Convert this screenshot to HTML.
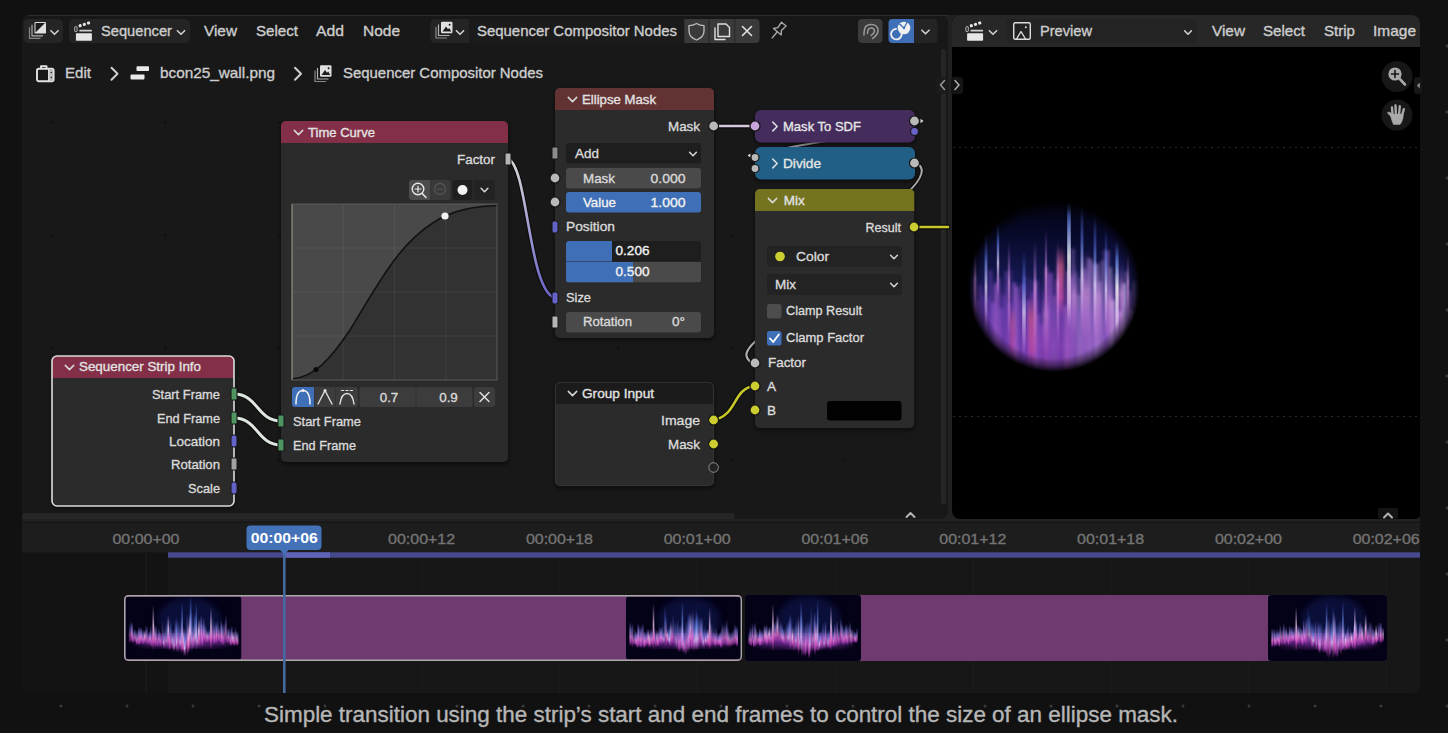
<!DOCTYPE html>
<html><head><meta charset="utf-8"><title>Sequencer Compositor Nodes</title>
<style>
html,body{margin:0;padding:0;background:#111112;width:1448px;height:733px;overflow:hidden}
svg{display:block;font-family:"Liberation Sans", "DejaVu Sans", sans-serif}
text{white-space:pre}
</style></head><body>
<svg width="1448" height="733" viewBox="0 0 1448 733">
<defs>
<clipPath id="frame"><rect x="22" y="15" width="1398" height="678" rx="8"/></clipPath>
<linearGradient id="wfs" x1="0" y1="0" x2="0" y2="1"><stop offset="0" stop-color="#d8d8d8"/><stop offset="1" stop-color="#6a63c9"/></linearGradient>
<filter id="blur1"><feGaussianBlur stdDeviation="0.6"/></filter>
<filter id="blur2"><feGaussianBlur stdDeviation="1.6"/></filter>
<filter id="blur3"><feGaussianBlur stdDeviation="3"/></filter>
<filter id="blur6"><feGaussianBlur stdDeviation="7"/></filter>
</defs>
<rect x="0" y="0" width="1448" height="733" fill="#111112" />
<circle cx="61" cy="46" r="1.5" fill="#3a3a3c"/>
<circle cx="61" cy="112" r="1.5" fill="#3a3a3c"/>
<circle cx="61" cy="178" r="1.5" fill="#3a3a3c"/>
<circle cx="61" cy="244" r="1.5" fill="#3a3a3c"/>
<circle cx="61" cy="310" r="1.5" fill="#3a3a3c"/>
<circle cx="61" cy="376" r="1.5" fill="#3a3a3c"/>
<circle cx="61" cy="442" r="1.5" fill="#3a3a3c"/>
<circle cx="61" cy="508" r="1.5" fill="#3a3a3c"/>
<circle cx="61" cy="574" r="1.5" fill="#3a3a3c"/>
<circle cx="61" cy="640" r="1.5" fill="#3a3a3c"/>
<circle cx="61" cy="706" r="1.5" fill="#3a3a3c"/>
<circle cx="127" cy="46" r="1.5" fill="#3a3a3c"/>
<circle cx="127" cy="112" r="1.5" fill="#3a3a3c"/>
<circle cx="127" cy="178" r="1.5" fill="#3a3a3c"/>
<circle cx="127" cy="244" r="1.5" fill="#3a3a3c"/>
<circle cx="127" cy="310" r="1.5" fill="#3a3a3c"/>
<circle cx="127" cy="376" r="1.5" fill="#3a3a3c"/>
<circle cx="127" cy="442" r="1.5" fill="#3a3a3c"/>
<circle cx="127" cy="508" r="1.5" fill="#3a3a3c"/>
<circle cx="127" cy="574" r="1.5" fill="#3a3a3c"/>
<circle cx="127" cy="640" r="1.5" fill="#3a3a3c"/>
<circle cx="127" cy="706" r="1.5" fill="#3a3a3c"/>
<circle cx="193" cy="46" r="1.5" fill="#3a3a3c"/>
<circle cx="193" cy="112" r="1.5" fill="#3a3a3c"/>
<circle cx="193" cy="178" r="1.5" fill="#3a3a3c"/>
<circle cx="193" cy="244" r="1.5" fill="#3a3a3c"/>
<circle cx="193" cy="310" r="1.5" fill="#3a3a3c"/>
<circle cx="193" cy="376" r="1.5" fill="#3a3a3c"/>
<circle cx="193" cy="442" r="1.5" fill="#3a3a3c"/>
<circle cx="193" cy="508" r="1.5" fill="#3a3a3c"/>
<circle cx="193" cy="574" r="1.5" fill="#3a3a3c"/>
<circle cx="193" cy="640" r="1.5" fill="#3a3a3c"/>
<circle cx="193" cy="706" r="1.5" fill="#3a3a3c"/>
<circle cx="259" cy="46" r="1.5" fill="#3a3a3c"/>
<circle cx="259" cy="112" r="1.5" fill="#3a3a3c"/>
<circle cx="259" cy="178" r="1.5" fill="#3a3a3c"/>
<circle cx="259" cy="244" r="1.5" fill="#3a3a3c"/>
<circle cx="259" cy="310" r="1.5" fill="#3a3a3c"/>
<circle cx="259" cy="376" r="1.5" fill="#3a3a3c"/>
<circle cx="259" cy="442" r="1.5" fill="#3a3a3c"/>
<circle cx="259" cy="508" r="1.5" fill="#3a3a3c"/>
<circle cx="259" cy="574" r="1.5" fill="#3a3a3c"/>
<circle cx="259" cy="640" r="1.5" fill="#3a3a3c"/>
<circle cx="259" cy="706" r="1.5" fill="#3a3a3c"/>
<circle cx="325" cy="46" r="1.5" fill="#3a3a3c"/>
<circle cx="325" cy="112" r="1.5" fill="#3a3a3c"/>
<circle cx="325" cy="178" r="1.5" fill="#3a3a3c"/>
<circle cx="325" cy="244" r="1.5" fill="#3a3a3c"/>
<circle cx="325" cy="310" r="1.5" fill="#3a3a3c"/>
<circle cx="325" cy="376" r="1.5" fill="#3a3a3c"/>
<circle cx="325" cy="442" r="1.5" fill="#3a3a3c"/>
<circle cx="325" cy="508" r="1.5" fill="#3a3a3c"/>
<circle cx="325" cy="574" r="1.5" fill="#3a3a3c"/>
<circle cx="325" cy="640" r="1.5" fill="#3a3a3c"/>
<circle cx="325" cy="706" r="1.5" fill="#3a3a3c"/>
<circle cx="391" cy="46" r="1.5" fill="#3a3a3c"/>
<circle cx="391" cy="112" r="1.5" fill="#3a3a3c"/>
<circle cx="391" cy="178" r="1.5" fill="#3a3a3c"/>
<circle cx="391" cy="244" r="1.5" fill="#3a3a3c"/>
<circle cx="391" cy="310" r="1.5" fill="#3a3a3c"/>
<circle cx="391" cy="376" r="1.5" fill="#3a3a3c"/>
<circle cx="391" cy="442" r="1.5" fill="#3a3a3c"/>
<circle cx="391" cy="508" r="1.5" fill="#3a3a3c"/>
<circle cx="391" cy="574" r="1.5" fill="#3a3a3c"/>
<circle cx="391" cy="640" r="1.5" fill="#3a3a3c"/>
<circle cx="391" cy="706" r="1.5" fill="#3a3a3c"/>
<circle cx="457" cy="46" r="1.5" fill="#3a3a3c"/>
<circle cx="457" cy="112" r="1.5" fill="#3a3a3c"/>
<circle cx="457" cy="178" r="1.5" fill="#3a3a3c"/>
<circle cx="457" cy="244" r="1.5" fill="#3a3a3c"/>
<circle cx="457" cy="310" r="1.5" fill="#3a3a3c"/>
<circle cx="457" cy="376" r="1.5" fill="#3a3a3c"/>
<circle cx="457" cy="442" r="1.5" fill="#3a3a3c"/>
<circle cx="457" cy="508" r="1.5" fill="#3a3a3c"/>
<circle cx="457" cy="574" r="1.5" fill="#3a3a3c"/>
<circle cx="457" cy="640" r="1.5" fill="#3a3a3c"/>
<circle cx="457" cy="706" r="1.5" fill="#3a3a3c"/>
<circle cx="523" cy="46" r="1.5" fill="#3a3a3c"/>
<circle cx="523" cy="112" r="1.5" fill="#3a3a3c"/>
<circle cx="523" cy="178" r="1.5" fill="#3a3a3c"/>
<circle cx="523" cy="244" r="1.5" fill="#3a3a3c"/>
<circle cx="523" cy="310" r="1.5" fill="#3a3a3c"/>
<circle cx="523" cy="376" r="1.5" fill="#3a3a3c"/>
<circle cx="523" cy="442" r="1.5" fill="#3a3a3c"/>
<circle cx="523" cy="508" r="1.5" fill="#3a3a3c"/>
<circle cx="523" cy="574" r="1.5" fill="#3a3a3c"/>
<circle cx="523" cy="640" r="1.5" fill="#3a3a3c"/>
<circle cx="523" cy="706" r="1.5" fill="#3a3a3c"/>
<circle cx="589" cy="46" r="1.5" fill="#3a3a3c"/>
<circle cx="589" cy="112" r="1.5" fill="#3a3a3c"/>
<circle cx="589" cy="178" r="1.5" fill="#3a3a3c"/>
<circle cx="589" cy="244" r="1.5" fill="#3a3a3c"/>
<circle cx="589" cy="310" r="1.5" fill="#3a3a3c"/>
<circle cx="589" cy="376" r="1.5" fill="#3a3a3c"/>
<circle cx="589" cy="442" r="1.5" fill="#3a3a3c"/>
<circle cx="589" cy="508" r="1.5" fill="#3a3a3c"/>
<circle cx="589" cy="574" r="1.5" fill="#3a3a3c"/>
<circle cx="589" cy="640" r="1.5" fill="#3a3a3c"/>
<circle cx="589" cy="706" r="1.5" fill="#3a3a3c"/>
<circle cx="655" cy="46" r="1.5" fill="#3a3a3c"/>
<circle cx="655" cy="112" r="1.5" fill="#3a3a3c"/>
<circle cx="655" cy="178" r="1.5" fill="#3a3a3c"/>
<circle cx="655" cy="244" r="1.5" fill="#3a3a3c"/>
<circle cx="655" cy="310" r="1.5" fill="#3a3a3c"/>
<circle cx="655" cy="376" r="1.5" fill="#3a3a3c"/>
<circle cx="655" cy="442" r="1.5" fill="#3a3a3c"/>
<circle cx="655" cy="508" r="1.5" fill="#3a3a3c"/>
<circle cx="655" cy="574" r="1.5" fill="#3a3a3c"/>
<circle cx="655" cy="640" r="1.5" fill="#3a3a3c"/>
<circle cx="655" cy="706" r="1.5" fill="#3a3a3c"/>
<circle cx="721" cy="46" r="1.5" fill="#3a3a3c"/>
<circle cx="721" cy="112" r="1.5" fill="#3a3a3c"/>
<circle cx="721" cy="178" r="1.5" fill="#3a3a3c"/>
<circle cx="721" cy="244" r="1.5" fill="#3a3a3c"/>
<circle cx="721" cy="310" r="1.5" fill="#3a3a3c"/>
<circle cx="721" cy="376" r="1.5" fill="#3a3a3c"/>
<circle cx="721" cy="442" r="1.5" fill="#3a3a3c"/>
<circle cx="721" cy="508" r="1.5" fill="#3a3a3c"/>
<circle cx="721" cy="574" r="1.5" fill="#3a3a3c"/>
<circle cx="721" cy="640" r="1.5" fill="#3a3a3c"/>
<circle cx="721" cy="706" r="1.5" fill="#3a3a3c"/>
<circle cx="787" cy="46" r="1.5" fill="#3a3a3c"/>
<circle cx="787" cy="112" r="1.5" fill="#3a3a3c"/>
<circle cx="787" cy="178" r="1.5" fill="#3a3a3c"/>
<circle cx="787" cy="244" r="1.5" fill="#3a3a3c"/>
<circle cx="787" cy="310" r="1.5" fill="#3a3a3c"/>
<circle cx="787" cy="376" r="1.5" fill="#3a3a3c"/>
<circle cx="787" cy="442" r="1.5" fill="#3a3a3c"/>
<circle cx="787" cy="508" r="1.5" fill="#3a3a3c"/>
<circle cx="787" cy="574" r="1.5" fill="#3a3a3c"/>
<circle cx="787" cy="640" r="1.5" fill="#3a3a3c"/>
<circle cx="787" cy="706" r="1.5" fill="#3a3a3c"/>
<circle cx="853" cy="46" r="1.5" fill="#3a3a3c"/>
<circle cx="853" cy="112" r="1.5" fill="#3a3a3c"/>
<circle cx="853" cy="178" r="1.5" fill="#3a3a3c"/>
<circle cx="853" cy="244" r="1.5" fill="#3a3a3c"/>
<circle cx="853" cy="310" r="1.5" fill="#3a3a3c"/>
<circle cx="853" cy="376" r="1.5" fill="#3a3a3c"/>
<circle cx="853" cy="442" r="1.5" fill="#3a3a3c"/>
<circle cx="853" cy="508" r="1.5" fill="#3a3a3c"/>
<circle cx="853" cy="574" r="1.5" fill="#3a3a3c"/>
<circle cx="853" cy="640" r="1.5" fill="#3a3a3c"/>
<circle cx="853" cy="706" r="1.5" fill="#3a3a3c"/>
<circle cx="919" cy="46" r="1.5" fill="#3a3a3c"/>
<circle cx="919" cy="112" r="1.5" fill="#3a3a3c"/>
<circle cx="919" cy="178" r="1.5" fill="#3a3a3c"/>
<circle cx="919" cy="244" r="1.5" fill="#3a3a3c"/>
<circle cx="919" cy="310" r="1.5" fill="#3a3a3c"/>
<circle cx="919" cy="376" r="1.5" fill="#3a3a3c"/>
<circle cx="919" cy="442" r="1.5" fill="#3a3a3c"/>
<circle cx="919" cy="508" r="1.5" fill="#3a3a3c"/>
<circle cx="919" cy="574" r="1.5" fill="#3a3a3c"/>
<circle cx="919" cy="640" r="1.5" fill="#3a3a3c"/>
<circle cx="919" cy="706" r="1.5" fill="#3a3a3c"/>
<circle cx="985" cy="46" r="1.5" fill="#3a3a3c"/>
<circle cx="985" cy="112" r="1.5" fill="#3a3a3c"/>
<circle cx="985" cy="178" r="1.5" fill="#3a3a3c"/>
<circle cx="985" cy="244" r="1.5" fill="#3a3a3c"/>
<circle cx="985" cy="310" r="1.5" fill="#3a3a3c"/>
<circle cx="985" cy="376" r="1.5" fill="#3a3a3c"/>
<circle cx="985" cy="442" r="1.5" fill="#3a3a3c"/>
<circle cx="985" cy="508" r="1.5" fill="#3a3a3c"/>
<circle cx="985" cy="574" r="1.5" fill="#3a3a3c"/>
<circle cx="985" cy="640" r="1.5" fill="#3a3a3c"/>
<circle cx="985" cy="706" r="1.5" fill="#3a3a3c"/>
<circle cx="1051" cy="46" r="1.5" fill="#3a3a3c"/>
<circle cx="1051" cy="112" r="1.5" fill="#3a3a3c"/>
<circle cx="1051" cy="178" r="1.5" fill="#3a3a3c"/>
<circle cx="1051" cy="244" r="1.5" fill="#3a3a3c"/>
<circle cx="1051" cy="310" r="1.5" fill="#3a3a3c"/>
<circle cx="1051" cy="376" r="1.5" fill="#3a3a3c"/>
<circle cx="1051" cy="442" r="1.5" fill="#3a3a3c"/>
<circle cx="1051" cy="508" r="1.5" fill="#3a3a3c"/>
<circle cx="1051" cy="574" r="1.5" fill="#3a3a3c"/>
<circle cx="1051" cy="640" r="1.5" fill="#3a3a3c"/>
<circle cx="1051" cy="706" r="1.5" fill="#3a3a3c"/>
<circle cx="1117" cy="46" r="1.5" fill="#3a3a3c"/>
<circle cx="1117" cy="112" r="1.5" fill="#3a3a3c"/>
<circle cx="1117" cy="178" r="1.5" fill="#3a3a3c"/>
<circle cx="1117" cy="244" r="1.5" fill="#3a3a3c"/>
<circle cx="1117" cy="310" r="1.5" fill="#3a3a3c"/>
<circle cx="1117" cy="376" r="1.5" fill="#3a3a3c"/>
<circle cx="1117" cy="442" r="1.5" fill="#3a3a3c"/>
<circle cx="1117" cy="508" r="1.5" fill="#3a3a3c"/>
<circle cx="1117" cy="574" r="1.5" fill="#3a3a3c"/>
<circle cx="1117" cy="640" r="1.5" fill="#3a3a3c"/>
<circle cx="1117" cy="706" r="1.5" fill="#3a3a3c"/>
<circle cx="1183" cy="46" r="1.5" fill="#3a3a3c"/>
<circle cx="1183" cy="112" r="1.5" fill="#3a3a3c"/>
<circle cx="1183" cy="178" r="1.5" fill="#3a3a3c"/>
<circle cx="1183" cy="244" r="1.5" fill="#3a3a3c"/>
<circle cx="1183" cy="310" r="1.5" fill="#3a3a3c"/>
<circle cx="1183" cy="376" r="1.5" fill="#3a3a3c"/>
<circle cx="1183" cy="442" r="1.5" fill="#3a3a3c"/>
<circle cx="1183" cy="508" r="1.5" fill="#3a3a3c"/>
<circle cx="1183" cy="574" r="1.5" fill="#3a3a3c"/>
<circle cx="1183" cy="640" r="1.5" fill="#3a3a3c"/>
<circle cx="1183" cy="706" r="1.5" fill="#3a3a3c"/>
<circle cx="1249" cy="46" r="1.5" fill="#3a3a3c"/>
<circle cx="1249" cy="112" r="1.5" fill="#3a3a3c"/>
<circle cx="1249" cy="178" r="1.5" fill="#3a3a3c"/>
<circle cx="1249" cy="244" r="1.5" fill="#3a3a3c"/>
<circle cx="1249" cy="310" r="1.5" fill="#3a3a3c"/>
<circle cx="1249" cy="376" r="1.5" fill="#3a3a3c"/>
<circle cx="1249" cy="442" r="1.5" fill="#3a3a3c"/>
<circle cx="1249" cy="508" r="1.5" fill="#3a3a3c"/>
<circle cx="1249" cy="574" r="1.5" fill="#3a3a3c"/>
<circle cx="1249" cy="640" r="1.5" fill="#3a3a3c"/>
<circle cx="1249" cy="706" r="1.5" fill="#3a3a3c"/>
<circle cx="1315" cy="46" r="1.5" fill="#3a3a3c"/>
<circle cx="1315" cy="112" r="1.5" fill="#3a3a3c"/>
<circle cx="1315" cy="178" r="1.5" fill="#3a3a3c"/>
<circle cx="1315" cy="244" r="1.5" fill="#3a3a3c"/>
<circle cx="1315" cy="310" r="1.5" fill="#3a3a3c"/>
<circle cx="1315" cy="376" r="1.5" fill="#3a3a3c"/>
<circle cx="1315" cy="442" r="1.5" fill="#3a3a3c"/>
<circle cx="1315" cy="508" r="1.5" fill="#3a3a3c"/>
<circle cx="1315" cy="574" r="1.5" fill="#3a3a3c"/>
<circle cx="1315" cy="640" r="1.5" fill="#3a3a3c"/>
<circle cx="1315" cy="706" r="1.5" fill="#3a3a3c"/>
<circle cx="1381" cy="46" r="1.5" fill="#3a3a3c"/>
<circle cx="1381" cy="112" r="1.5" fill="#3a3a3c"/>
<circle cx="1381" cy="178" r="1.5" fill="#3a3a3c"/>
<circle cx="1381" cy="244" r="1.5" fill="#3a3a3c"/>
<circle cx="1381" cy="310" r="1.5" fill="#3a3a3c"/>
<circle cx="1381" cy="376" r="1.5" fill="#3a3a3c"/>
<circle cx="1381" cy="442" r="1.5" fill="#3a3a3c"/>
<circle cx="1381" cy="508" r="1.5" fill="#3a3a3c"/>
<circle cx="1381" cy="574" r="1.5" fill="#3a3a3c"/>
<circle cx="1381" cy="640" r="1.5" fill="#3a3a3c"/>
<circle cx="1381" cy="706" r="1.5" fill="#3a3a3c"/>
<circle cx="1447" cy="46" r="1.5" fill="#3a3a3c"/>
<circle cx="1447" cy="112" r="1.5" fill="#3a3a3c"/>
<circle cx="1447" cy="178" r="1.5" fill="#3a3a3c"/>
<circle cx="1447" cy="244" r="1.5" fill="#3a3a3c"/>
<circle cx="1447" cy="310" r="1.5" fill="#3a3a3c"/>
<circle cx="1447" cy="376" r="1.5" fill="#3a3a3c"/>
<circle cx="1447" cy="442" r="1.5" fill="#3a3a3c"/>
<circle cx="1447" cy="508" r="1.5" fill="#3a3a3c"/>
<circle cx="1447" cy="574" r="1.5" fill="#3a3a3c"/>
<circle cx="1447" cy="640" r="1.5" fill="#3a3a3c"/>
<circle cx="1447" cy="706" r="1.5" fill="#3a3a3c"/>
<circle cx="1513" cy="46" r="1.5" fill="#3a3a3c"/>
<circle cx="1513" cy="112" r="1.5" fill="#3a3a3c"/>
<circle cx="1513" cy="178" r="1.5" fill="#3a3a3c"/>
<circle cx="1513" cy="244" r="1.5" fill="#3a3a3c"/>
<circle cx="1513" cy="310" r="1.5" fill="#3a3a3c"/>
<circle cx="1513" cy="376" r="1.5" fill="#3a3a3c"/>
<circle cx="1513" cy="442" r="1.5" fill="#3a3a3c"/>
<circle cx="1513" cy="508" r="1.5" fill="#3a3a3c"/>
<circle cx="1513" cy="574" r="1.5" fill="#3a3a3c"/>
<circle cx="1513" cy="640" r="1.5" fill="#3a3a3c"/>
<circle cx="1513" cy="706" r="1.5" fill="#3a3a3c"/>
<g clip-path="url(#frame)">
<rect x="22" y="15" width="1398" height="678" fill="#212121" />
<rect x="22" y="15" width="926" height="504" fill="#181818" rx="8" />
<rect x="22" y="15" width="926" height="1" fill="#2c2c2c" />
<circle cx="52.0" cy="122.6" r="1.5" fill="#121212"/>
<circle cx="52.0" cy="235.0" r="1.5" fill="#121212"/>
<circle cx="52.0" cy="347.4" r="1.5" fill="#121212"/>
<circle cx="52.0" cy="459.80000000000007" r="1.5" fill="#121212"/>
<circle cx="165.3" cy="122.6" r="1.5" fill="#121212"/>
<circle cx="165.3" cy="235.0" r="1.5" fill="#121212"/>
<circle cx="165.3" cy="347.4" r="1.5" fill="#121212"/>
<circle cx="165.3" cy="459.80000000000007" r="1.5" fill="#121212"/>
<circle cx="278.6" cy="122.6" r="1.5" fill="#121212"/>
<circle cx="278.6" cy="235.0" r="1.5" fill="#121212"/>
<circle cx="278.6" cy="347.4" r="1.5" fill="#121212"/>
<circle cx="278.6" cy="459.80000000000007" r="1.5" fill="#121212"/>
<circle cx="391.9" cy="122.6" r="1.5" fill="#121212"/>
<circle cx="391.9" cy="235.0" r="1.5" fill="#121212"/>
<circle cx="391.9" cy="347.4" r="1.5" fill="#121212"/>
<circle cx="391.9" cy="459.80000000000007" r="1.5" fill="#121212"/>
<circle cx="505.2" cy="122.6" r="1.5" fill="#121212"/>
<circle cx="505.2" cy="235.0" r="1.5" fill="#121212"/>
<circle cx="505.2" cy="347.4" r="1.5" fill="#121212"/>
<circle cx="505.2" cy="459.80000000000007" r="1.5" fill="#121212"/>
<circle cx="618.5" cy="122.6" r="1.5" fill="#121212"/>
<circle cx="618.5" cy="235.0" r="1.5" fill="#121212"/>
<circle cx="618.5" cy="347.4" r="1.5" fill="#121212"/>
<circle cx="618.5" cy="459.80000000000007" r="1.5" fill="#121212"/>
<circle cx="731.8" cy="122.6" r="1.5" fill="#121212"/>
<circle cx="731.8" cy="235.0" r="1.5" fill="#121212"/>
<circle cx="731.8" cy="347.4" r="1.5" fill="#121212"/>
<circle cx="731.8" cy="459.80000000000007" r="1.5" fill="#121212"/>
<circle cx="845.1" cy="122.6" r="1.5" fill="#121212"/>
<circle cx="845.1" cy="235.0" r="1.5" fill="#121212"/>
<circle cx="845.1" cy="347.4" r="1.5" fill="#121212"/>
<circle cx="845.1" cy="459.80000000000007" r="1.5" fill="#121212"/>
<circle cx="958.4" cy="122.6" r="1.5" fill="#121212"/>
<circle cx="958.4" cy="235.0" r="1.5" fill="#121212"/>
<circle cx="958.4" cy="347.4" r="1.5" fill="#121212"/>
<circle cx="958.4" cy="459.80000000000007" r="1.5" fill="#121212"/>
<rect x="952" y="15" width="470" height="504" fill="#000000" rx="8" />
<rect x="952" y="15" width="470" height="32" fill="#272727" rx="8" />
<rect x="952" y="30" width="470" height="17" fill="#272727" />
<rect x="22" y="521.5" width="1398" height="172" fill="#171717" />
<rect x="22" y="552" width="146" height="141" fill="#131313" />
<rect x="22" y="523" width="1398" height="29.5" fill="#1d1d1d" />
</g>
<g clip-path="url(#frame)">
<rect x="22" y="513" width="713" height="6" fill="#262626" rx="3" />
<rect x="145.5" y="553" width="1.5" height="140" fill="#1b1b1b" />
<text x="146.0" y="544" font-size="14.5" fill="#747474" text-anchor="middle" textLength="67" lengthAdjust="spacingAndGlyphs" stroke="#747474" stroke-width="0.35" >00:00+00</text>
<rect x="283.5" y="553" width="1.5" height="140" fill="#1b1b1b" />
<rect x="421.5" y="553" width="1.5" height="140" fill="#1b1b1b" />
<text x="421.6" y="544" font-size="14.5" fill="#747474" text-anchor="middle" textLength="67" lengthAdjust="spacingAndGlyphs" stroke="#747474" stroke-width="0.35" >00:00+12</text>
<rect x="558.5" y="553" width="1.5" height="140" fill="#1b1b1b" />
<text x="559.4000000000001" y="544" font-size="14.5" fill="#747474" text-anchor="middle" textLength="67" lengthAdjust="spacingAndGlyphs" stroke="#747474" stroke-width="0.35" >00:00+18</text>
<rect x="696.5" y="553" width="1.5" height="140" fill="#1b1b1b" />
<text x="697.2" y="544" font-size="14.5" fill="#747474" text-anchor="middle" textLength="67" lengthAdjust="spacingAndGlyphs" stroke="#747474" stroke-width="0.35" >00:01+00</text>
<rect x="834.5" y="553" width="1.5" height="140" fill="#1b1b1b" />
<text x="835.0" y="544" font-size="14.5" fill="#747474" text-anchor="middle" textLength="67" lengthAdjust="spacingAndGlyphs" stroke="#747474" stroke-width="0.35" >00:01+06</text>
<rect x="972.5" y="553" width="1.5" height="140" fill="#1b1b1b" />
<text x="972.8000000000001" y="544" font-size="14.5" fill="#747474" text-anchor="middle" textLength="67" lengthAdjust="spacingAndGlyphs" stroke="#747474" stroke-width="0.35" >00:01+12</text>
<rect x="1110.5" y="553" width="1.5" height="140" fill="#1b1b1b" />
<text x="1110.6000000000001" y="544" font-size="14.5" fill="#747474" text-anchor="middle" textLength="67" lengthAdjust="spacingAndGlyphs" stroke="#747474" stroke-width="0.35" >00:01+18</text>
<rect x="1247.5" y="553" width="1.5" height="140" fill="#1b1b1b" />
<text x="1248.4" y="544" font-size="14.5" fill="#747474" text-anchor="middle" textLength="67" lengthAdjust="spacingAndGlyphs" stroke="#747474" stroke-width="0.35" >00:02+00</text>
<rect x="1385.5" y="553" width="1.5" height="140" fill="#1b1b1b" />
<text x="1386.2" y="544" font-size="14.5" fill="#747474" text-anchor="middle" textLength="67" lengthAdjust="spacingAndGlyphs" stroke="#747474" stroke-width="0.35" >00:02+06</text>
<rect x="168" y="552.3" width="1252" height="5.4" fill="#47498e" />
<rect x="284" y="552.3" width="46" height="5.4" fill="#6064b8" />
<defs>
<linearGradient id="tg1" x1="0" y1="0" x2="0" y2="1"><stop offset="0" stop-color="#6a7ae8" stop-opacity="0"/><stop offset="0.35" stop-color="#8f7fe0" stop-opacity="0.75"/><stop offset="0.62" stop-color="#e07ad8"/><stop offset="0.85" stop-color="#b040b8" stop-opacity="0.9"/><stop offset="1" stop-color="#7a2a90" stop-opacity="0"/></linearGradient>
<linearGradient id="tg2" x1="0" y1="0" x2="0" y2="1"><stop offset="0" stop-color="#4a60d8" stop-opacity="0"/><stop offset="0.4" stop-color="#6a86e8" stop-opacity="0.8"/><stop offset="0.7" stop-color="#d8b0f0"/><stop offset="1" stop-color="#a040b0" stop-opacity="0"/></linearGradient>
<linearGradient id="tg3" x1="0" y1="0" x2="0" y2="1"><stop offset="0" stop-color="#c8a0f0" stop-opacity="0"/><stop offset="0.45" stop-color="#f0c8f0" stop-opacity="0.95"/><stop offset="0.75" stop-color="#e060c0"/><stop offset="1" stop-color="#902890" stop-opacity="0"/></linearGradient>
</defs>
<rect x="124" y="595" width="618" height="66" fill="#6f3a70" rx="4" />
<g><clipPath id="tc1"><rect x="125.5" y="596.5" width="116" height="63" rx="3"/></clipPath><g clip-path="url(#tc1)">
<rect x="125.5" y="596.5" width="116" height="63" fill="#040216" />
<ellipse cx="189.3" cy="619.18" rx="31.32" ry="21.42" fill="#0d1248" filter="url(#blur3)" opacity="0.7"/>
<ellipse cx="183.5" cy="640.6" rx="49.88" ry="6.300000000000001" fill="#7a2fa0" filter="url(#blur3)" opacity="0.8"/>
<g filter="url(#blur1)">
<rect x="128.8" y="623.0" width="1.7" height="20.6" fill="url(#tg1)" opacity="0.46"/>
<rect x="130.0" y="620.3" width="1.7" height="22.7" fill="url(#tg1)" opacity="0.40"/>
<rect x="131.1" y="621.7" width="1.7" height="20.6" fill="url(#tg1)" opacity="0.94"/>
<rect x="132.3" y="631.1" width="1.7" height="12.4" fill="url(#tg1)" opacity="0.63"/>
<rect x="133.5" y="628.1" width="1.7" height="13.8" fill="url(#tg1)" opacity="0.66"/>
<rect x="134.7" y="629.5" width="1.7" height="13.2" fill="url(#tg1)" opacity="0.68"/>
<rect x="135.8" y="632.0" width="1.7" height="13.0" fill="url(#tg1)" opacity="0.79"/>
<rect x="137.0" y="628.8" width="1.7" height="16.4" fill="url(#tg1)" opacity="0.60"/>
<rect x="138.2" y="626.2" width="1.7" height="19.5" fill="url(#tg1)" opacity="0.90"/>
<rect x="139.4" y="627.7" width="1.7" height="16.8" fill="url(#tg1)" opacity="0.91"/>
<rect x="140.5" y="626.9" width="1.7" height="15.8" fill="url(#tg1)" opacity="0.88"/>
<rect x="141.7" y="630.2" width="1.7" height="14.5" fill="url(#tg1)" opacity="0.80"/>
<rect x="142.9" y="629.3" width="1.7" height="15.5" fill="url(#tg1)" opacity="0.71"/>
<rect x="144.1" y="630.3" width="1.7" height="12.9" fill="url(#tg3)" opacity="0.82"/>
<rect x="145.2" y="625.0" width="1.7" height="19.7" fill="url(#tg1)" opacity="0.70"/>
<rect x="146.4" y="626.0" width="1.7" height="19.3" fill="url(#tg1)" opacity="0.54"/>
<rect x="147.6" y="632.2" width="1.7" height="13.4" fill="url(#tg1)" opacity="0.56"/>
<rect x="148.8" y="630.9" width="1.7" height="12.9" fill="url(#tg1)" opacity="0.89"/>
<rect x="149.9" y="625.1" width="1.7" height="21.7" fill="url(#tg1)" opacity="0.74"/>
<rect x="151.1" y="632.3" width="1.7" height="14.9" fill="url(#tg1)" opacity="0.52"/>
<rect x="152.3" y="626.7" width="1.7" height="18.9" fill="url(#tg1)" opacity="0.72"/>
<rect x="153.5" y="623.5" width="1.7" height="22.5" fill="url(#tg3)" opacity="0.54"/>
<rect x="154.6" y="625.4" width="1.7" height="22.2" fill="url(#tg1)" opacity="0.88"/>
<rect x="155.8" y="624.9" width="1.7" height="22.8" fill="url(#tg1)" opacity="0.45"/>
<rect x="157.0" y="633.7" width="1.7" height="13.9" fill="url(#tg1)" opacity="0.47"/>
<rect x="158.1" y="627.9" width="1.7" height="17.4" fill="url(#tg1)" opacity="0.72"/>
<rect x="159.3" y="630.7" width="1.7" height="17.0" fill="url(#tg1)" opacity="0.59"/>
<rect x="160.5" y="632.5" width="1.7" height="14.2" fill="url(#tg1)" opacity="0.47"/>
<rect x="161.7" y="620.5" width="1.7" height="25.7" fill="url(#tg1)" opacity="0.41"/>
<rect x="162.8" y="630.0" width="1.7" height="18.3" fill="url(#tg2)" opacity="0.81"/>
<rect x="164.0" y="626.3" width="1.7" height="23.2" fill="url(#tg1)" opacity="0.53"/>
<rect x="165.2" y="622.0" width="1.7" height="26.1" fill="url(#tg2)" opacity="0.44"/>
<rect x="166.4" y="618.7" width="1.7" height="31.0" fill="url(#tg2)" opacity="0.59"/>
<rect x="167.5" y="614.9" width="1.7" height="33.2" fill="url(#tg3)" opacity="0.93"/>
<rect x="168.7" y="625.8" width="1.7" height="25.1" fill="url(#tg1)" opacity="0.92"/>
<rect x="169.9" y="619.4" width="1.7" height="29.8" fill="url(#tg1)" opacity="0.52"/>
<rect x="171.1" y="628.1" width="1.7" height="19.9" fill="url(#tg2)" opacity="0.58"/>
<rect x="172.2" y="630.3" width="1.7" height="21.7" fill="url(#tg3)" opacity="0.52"/>
<rect x="173.4" y="628.7" width="1.7" height="23.4" fill="url(#tg2)" opacity="0.80"/>
<rect x="174.6" y="619.5" width="1.7" height="30.5" fill="url(#tg1)" opacity="0.69"/>
<rect x="175.8" y="616.8" width="1.7" height="36.1" fill="url(#tg2)" opacity="0.95"/>
<rect x="176.9" y="622.1" width="1.7" height="30.5" fill="url(#tg1)" opacity="0.60"/>
<rect x="178.1" y="620.6" width="1.7" height="32.5" fill="url(#tg1)" opacity="0.48"/>
<rect x="179.3" y="626.5" width="1.7" height="22.9" fill="url(#tg2)" opacity="0.87"/>
<rect x="180.5" y="619.8" width="1.7" height="34.1" fill="url(#tg1)" opacity="0.74"/>
<rect x="181.6" y="629.3" width="1.7" height="22.2" fill="url(#tg1)" opacity="0.96"/>
<rect x="182.8" y="627.0" width="1.7" height="28.6" fill="url(#tg3)" opacity="0.80"/>
<rect x="184.0" y="628.6" width="1.7" height="27.9" fill="url(#tg2)" opacity="0.99"/>
<rect x="185.1" y="626.5" width="1.7" height="24.1" fill="url(#tg2)" opacity="0.46"/>
<rect x="186.3" y="612.4" width="1.7" height="44.3" fill="url(#tg1)" opacity="0.55"/>
<rect x="187.5" y="623.7" width="1.7" height="30.2" fill="url(#tg3)" opacity="0.99"/>
<rect x="188.7" y="613.3" width="1.7" height="38.6" fill="url(#tg3)" opacity="0.95"/>
<rect x="189.8" y="596.1" width="1.7" height="52.7" fill="url(#tg2)" opacity="0.99"/>
<rect x="191.0" y="610.9" width="1.7" height="41.4" fill="url(#tg2)" opacity="0.58"/>
<rect x="192.2" y="625.4" width="1.7" height="23.5" fill="url(#tg1)" opacity="0.79"/>
<rect x="193.4" y="613.0" width="1.7" height="35.9" fill="url(#tg2)" opacity="0.59"/>
<rect x="194.5" y="612.2" width="1.7" height="35.5" fill="url(#tg2)" opacity="0.75"/>
<rect x="195.7" y="622.9" width="1.7" height="22.4" fill="url(#tg3)" opacity="0.73"/>
<rect x="196.9" y="627.3" width="1.7" height="20.9" fill="url(#tg2)" opacity="0.70"/>
<rect x="198.1" y="618.6" width="1.7" height="28.2" fill="url(#tg3)" opacity="0.97"/>
<rect x="199.2" y="618.2" width="1.7" height="30.4" fill="url(#tg1)" opacity="0.46"/>
<rect x="200.4" y="615.1" width="1.7" height="29.6" fill="url(#tg1)" opacity="0.95"/>
<rect x="201.6" y="623.3" width="1.7" height="23.7" fill="url(#tg1)" opacity="0.90"/>
<rect x="202.8" y="617.4" width="1.7" height="25.9" fill="url(#tg1)" opacity="0.83"/>
<rect x="203.9" y="624.1" width="1.7" height="18.5" fill="url(#tg1)" opacity="0.73"/>
<rect x="205.1" y="625.6" width="1.7" height="18.2" fill="url(#tg1)" opacity="0.55"/>
<rect x="206.3" y="629.7" width="1.7" height="13.8" fill="url(#tg3)" opacity="0.61"/>
<rect x="207.5" y="630.4" width="1.7" height="12.3" fill="url(#tg1)" opacity="0.64"/>
<rect x="208.6" y="628.1" width="1.7" height="13.6" fill="url(#tg1)" opacity="0.70"/>
<rect x="209.8" y="626.3" width="1.7" height="17.9" fill="url(#tg1)" opacity="0.54"/>
<rect x="211.0" y="625.9" width="1.7" height="16.6" fill="url(#tg1)" opacity="0.74"/>
<rect x="212.1" y="616.6" width="1.7" height="26.1" fill="url(#tg1)" opacity="0.43"/>
<rect x="213.3" y="624.7" width="1.7" height="20.2" fill="url(#tg1)" opacity="0.86"/>
<rect x="214.5" y="621.1" width="1.7" height="23.2" fill="url(#tg1)" opacity="0.62"/>
<rect x="215.7" y="621.8" width="1.7" height="22.2" fill="url(#tg1)" opacity="0.94"/>
<rect x="216.8" y="619.9" width="1.7" height="22.8" fill="url(#tg1)" opacity="0.53"/>
<rect x="218.0" y="625.7" width="1.7" height="16.7" fill="url(#tg1)" opacity="0.83"/>
<rect x="219.2" y="628.1" width="1.7" height="14.8" fill="url(#tg1)" opacity="0.42"/>
<rect x="220.4" y="619.3" width="1.7" height="25.4" fill="url(#tg1)" opacity="0.95"/>
<rect x="221.5" y="623.5" width="1.7" height="21.9" fill="url(#tg1)" opacity="0.80"/>
<rect x="222.7" y="623.6" width="1.7" height="22.5" fill="url(#tg1)" opacity="0.63"/>
<rect x="223.9" y="621.6" width="1.7" height="22.0" fill="url(#tg1)" opacity="0.48"/>
<rect x="225.1" y="614.7" width="1.7" height="28.8" fill="url(#tg1)" opacity="0.64"/>
<rect x="226.2" y="627.6" width="1.7" height="16.6" fill="url(#tg1)" opacity="0.40"/>
<rect x="227.4" y="627.4" width="1.7" height="16.2" fill="url(#tg1)" opacity="0.76"/>
<rect x="228.6" y="626.8" width="1.7" height="17.8" fill="url(#tg1)" opacity="0.56"/>
<rect x="229.8" y="630.5" width="1.7" height="15.7" fill="url(#tg1)" opacity="0.89"/>
<rect x="230.9" y="625.2" width="1.7" height="20.5" fill="url(#tg1)" opacity="0.86"/>
<rect x="232.1" y="631.4" width="1.7" height="13.7" fill="url(#tg3)" opacity="0.88"/>
<rect x="233.3" y="631.4" width="1.7" height="14.8" fill="url(#tg1)" opacity="0.86"/>
<rect x="234.5" y="626.7" width="1.7" height="19.4" fill="url(#tg1)" opacity="0.59"/>
<rect x="235.6" y="630.6" width="1.7" height="15.8" fill="url(#tg3)" opacity="0.67"/>
<rect x="236.8" y="631.1" width="1.7" height="15.0" fill="url(#tg1)" opacity="0.81"/>
<rect x="152.5" y="605.2" width="1.6" height="45.5" fill="url(#tg3)" opacity="0.85"/>
<rect x="181.3" y="601.8" width="1.6" height="48.9" fill="url(#tg2)" opacity="0.85"/>
<rect x="195.5" y="602.4" width="1.6" height="48.3" fill="url(#tg2)" opacity="0.85"/>
<rect x="210.2" y="606.9" width="1.6" height="43.7" fill="url(#tg3)" opacity="0.85"/>
</g>
</g></g>
<g><clipPath id="tc2"><rect x="626" y="596.5" width="115" height="63" rx="3"/></clipPath><g clip-path="url(#tc2)">
<rect x="626" y="596.5" width="115" height="63" fill="#040216" />
<ellipse cx="689.25" cy="619.18" rx="31.05" ry="21.42" fill="#0d1248" filter="url(#blur3)" opacity="0.7"/>
<ellipse cx="683.5" cy="640.6" rx="49.449999999999996" ry="6.300000000000001" fill="#7a2fa0" filter="url(#blur3)" opacity="0.8"/>
<g filter="url(#blur1)">
<rect x="629.3" y="621.1" width="1.7" height="25.5" fill="url(#tg1)" opacity="0.76"/>
<rect x="630.5" y="625.3" width="1.7" height="19.6" fill="url(#tg1)" opacity="0.64"/>
<rect x="631.6" y="622.6" width="1.7" height="25.3" fill="url(#tg1)" opacity="0.67"/>
<rect x="632.8" y="633.9" width="1.7" height="10.8" fill="url(#tg1)" opacity="0.59"/>
<rect x="634.0" y="628.4" width="1.7" height="18.2" fill="url(#tg1)" opacity="0.54"/>
<rect x="635.1" y="631.9" width="1.7" height="13.4" fill="url(#tg1)" opacity="1.00"/>
<rect x="636.3" y="630.5" width="1.7" height="17.5" fill="url(#tg1)" opacity="0.84"/>
<rect x="637.4" y="622.6" width="1.7" height="25.2" fill="url(#tg1)" opacity="0.99"/>
<rect x="638.6" y="625.6" width="1.7" height="22.0" fill="url(#tg1)" opacity="0.68"/>
<rect x="639.8" y="627.0" width="1.7" height="21.2" fill="url(#tg1)" opacity="0.90"/>
<rect x="640.9" y="624.9" width="1.7" height="23.3" fill="url(#tg1)" opacity="0.74"/>
<rect x="642.1" y="622.0" width="1.7" height="24.7" fill="url(#tg1)" opacity="0.59"/>
<rect x="643.3" y="630.5" width="1.7" height="17.7" fill="url(#tg1)" opacity="0.95"/>
<rect x="644.4" y="631.0" width="1.7" height="16.4" fill="url(#tg1)" opacity="0.71"/>
<rect x="645.6" y="631.8" width="1.7" height="14.2" fill="url(#tg1)" opacity="0.71"/>
<rect x="646.7" y="628.5" width="1.7" height="16.6" fill="url(#tg1)" opacity="0.84"/>
<rect x="647.9" y="629.0" width="1.7" height="18.3" fill="url(#tg3)" opacity="0.79"/>
<rect x="649.1" y="633.7" width="1.7" height="14.1" fill="url(#tg3)" opacity="0.71"/>
<rect x="650.2" y="628.0" width="1.7" height="17.3" fill="url(#tg1)" opacity="0.65"/>
<rect x="651.4" y="630.9" width="1.7" height="14.8" fill="url(#tg1)" opacity="0.80"/>
<rect x="652.6" y="626.9" width="1.7" height="17.5" fill="url(#tg1)" opacity="0.41"/>
<rect x="653.7" y="627.3" width="1.7" height="17.4" fill="url(#tg1)" opacity="0.81"/>
<rect x="654.9" y="632.5" width="1.7" height="15.1" fill="url(#tg1)" opacity="0.42"/>
<rect x="656.0" y="629.5" width="1.7" height="17.0" fill="url(#tg3)" opacity="0.60"/>
<rect x="657.2" y="630.9" width="1.7" height="15.6" fill="url(#tg1)" opacity="0.94"/>
<rect x="658.4" y="625.6" width="1.7" height="20.6" fill="url(#tg1)" opacity="0.54"/>
<rect x="659.5" y="627.4" width="1.7" height="16.5" fill="url(#tg1)" opacity="0.92"/>
<rect x="660.7" y="626.2" width="1.7" height="18.7" fill="url(#tg1)" opacity="0.98"/>
<rect x="661.9" y="623.0" width="1.7" height="21.9" fill="url(#tg2)" opacity="0.48"/>
<rect x="663.0" y="630.0" width="1.7" height="14.0" fill="url(#tg2)" opacity="0.70"/>
<rect x="664.2" y="605.9" width="1.7" height="41.3" fill="url(#tg2)" opacity="0.55"/>
<rect x="665.4" y="616.1" width="1.7" height="30.5" fill="url(#tg1)" opacity="0.65"/>
<rect x="666.5" y="629.0" width="1.7" height="14.5" fill="url(#tg3)" opacity="0.83"/>
<rect x="667.7" y="627.3" width="1.7" height="17.0" fill="url(#tg2)" opacity="0.71"/>
<rect x="668.8" y="624.3" width="1.7" height="22.3" fill="url(#tg2)" opacity="0.98"/>
<rect x="670.0" y="620.9" width="1.7" height="25.4" fill="url(#tg3)" opacity="0.65"/>
<rect x="671.2" y="625.4" width="1.7" height="19.1" fill="url(#tg1)" opacity="0.71"/>
<rect x="672.3" y="614.0" width="1.7" height="31.9" fill="url(#tg1)" opacity="0.41"/>
<rect x="673.5" y="622.8" width="1.7" height="23.6" fill="url(#tg1)" opacity="0.41"/>
<rect x="674.7" y="620.2" width="1.7" height="27.7" fill="url(#tg2)" opacity="0.44"/>
<rect x="675.8" y="620.8" width="1.7" height="30.5" fill="url(#tg2)" opacity="0.52"/>
<rect x="677.0" y="619.1" width="1.7" height="29.7" fill="url(#tg1)" opacity="0.47"/>
<rect x="678.1" y="626.4" width="1.7" height="25.7" fill="url(#tg1)" opacity="0.82"/>
<rect x="679.3" y="623.8" width="1.7" height="28.4" fill="url(#tg1)" opacity="0.61"/>
<rect x="680.5" y="625.2" width="1.7" height="23.7" fill="url(#tg1)" opacity="0.97"/>
<rect x="681.6" y="621.7" width="1.7" height="31.9" fill="url(#tg2)" opacity="0.69"/>
<rect x="682.8" y="627.9" width="1.7" height="24.8" fill="url(#tg1)" opacity="0.89"/>
<rect x="684.0" y="626.7" width="1.7" height="28.7" fill="url(#tg2)" opacity="0.44"/>
<rect x="685.1" y="621.7" width="1.7" height="33.8" fill="url(#tg1)" opacity="0.58"/>
<rect x="686.3" y="619.2" width="1.7" height="33.8" fill="url(#tg1)" opacity="0.47"/>
<rect x="687.5" y="612.1" width="1.7" height="41.3" fill="url(#tg2)" opacity="0.83"/>
<rect x="688.6" y="613.3" width="1.7" height="37.7" fill="url(#tg1)" opacity="1.00"/>
<rect x="689.8" y="611.8" width="1.7" height="36.6" fill="url(#tg3)" opacity="0.76"/>
<rect x="690.9" y="615.8" width="1.7" height="34.9" fill="url(#tg1)" opacity="0.83"/>
<rect x="692.1" y="610.3" width="1.7" height="39.8" fill="url(#tg1)" opacity="0.85"/>
<rect x="693.3" y="617.7" width="1.7" height="34.4" fill="url(#tg2)" opacity="0.64"/>
<rect x="694.4" y="616.2" width="1.7" height="34.0" fill="url(#tg2)" opacity="0.83"/>
<rect x="695.6" y="612.7" width="1.7" height="38.1" fill="url(#tg2)" opacity="0.84"/>
<rect x="696.8" y="613.5" width="1.7" height="37.1" fill="url(#tg2)" opacity="0.86"/>
<rect x="697.9" y="615.5" width="1.7" height="33.0" fill="url(#tg2)" opacity="0.48"/>
<rect x="699.1" y="616.6" width="1.7" height="29.8" fill="url(#tg1)" opacity="0.52"/>
<rect x="700.2" y="617.7" width="1.7" height="27.2" fill="url(#tg1)" opacity="0.80"/>
<rect x="701.4" y="616.4" width="1.7" height="31.5" fill="url(#tg2)" opacity="0.70"/>
<rect x="702.6" y="629.1" width="1.7" height="18.8" fill="url(#tg2)" opacity="0.87"/>
<rect x="703.7" y="624.7" width="1.7" height="23.2" fill="url(#tg1)" opacity="0.50"/>
<rect x="704.9" y="628.6" width="1.7" height="17.1" fill="url(#tg2)" opacity="0.98"/>
<rect x="706.1" y="629.8" width="1.7" height="16.1" fill="url(#tg1)" opacity="0.59"/>
<rect x="707.2" y="628.2" width="1.7" height="18.3" fill="url(#tg3)" opacity="0.89"/>
<rect x="708.4" y="629.4" width="1.7" height="18.1" fill="url(#tg1)" opacity="0.64"/>
<rect x="709.5" y="626.9" width="1.7" height="20.1" fill="url(#tg1)" opacity="0.72"/>
<rect x="710.7" y="621.7" width="1.7" height="25.2" fill="url(#tg1)" opacity="0.54"/>
<rect x="711.9" y="630.0" width="1.7" height="15.7" fill="url(#tg1)" opacity="0.47"/>
<rect x="713.0" y="625.9" width="1.7" height="20.1" fill="url(#tg1)" opacity="0.45"/>
<rect x="714.2" y="632.1" width="1.7" height="14.3" fill="url(#tg1)" opacity="0.94"/>
<rect x="715.4" y="626.6" width="1.7" height="20.5" fill="url(#tg1)" opacity="0.60"/>
<rect x="716.5" y="634.2" width="1.7" height="11.4" fill="url(#tg1)" opacity="0.62"/>
<rect x="717.7" y="633.4" width="1.7" height="12.4" fill="url(#tg1)" opacity="0.78"/>
<rect x="718.9" y="632.2" width="1.7" height="14.0" fill="url(#tg1)" opacity="0.96"/>
<rect x="720.0" y="630.0" width="1.7" height="18.3" fill="url(#tg1)" opacity="0.85"/>
<rect x="721.2" y="622.5" width="1.7" height="25.2" fill="url(#tg1)" opacity="0.57"/>
<rect x="722.3" y="625.1" width="1.7" height="21.2" fill="url(#tg1)" opacity="0.50"/>
<rect x="723.5" y="622.3" width="1.7" height="24.3" fill="url(#tg1)" opacity="0.51"/>
<rect x="724.7" y="625.3" width="1.7" height="19.8" fill="url(#tg1)" opacity="0.62"/>
<rect x="725.8" y="619.4" width="1.7" height="28.2" fill="url(#tg1)" opacity="0.73"/>
<rect x="727.0" y="626.8" width="1.7" height="19.4" fill="url(#tg1)" opacity="0.78"/>
<rect x="728.2" y="631.3" width="1.7" height="16.7" fill="url(#tg3)" opacity="0.49"/>
<rect x="729.3" y="632.1" width="1.7" height="14.0" fill="url(#tg1)" opacity="0.61"/>
<rect x="730.5" y="632.0" width="1.7" height="14.7" fill="url(#tg1)" opacity="0.62"/>
<rect x="731.6" y="630.2" width="1.7" height="14.8" fill="url(#tg1)" opacity="0.66"/>
<rect x="732.8" y="628.6" width="1.7" height="17.5" fill="url(#tg1)" opacity="0.60"/>
<rect x="734.0" y="623.5" width="1.7" height="22.1" fill="url(#tg1)" opacity="0.64"/>
<rect x="735.1" y="625.5" width="1.7" height="19.6" fill="url(#tg1)" opacity="0.76"/>
<rect x="736.3" y="626.1" width="1.7" height="21.2" fill="url(#tg1)" opacity="0.90"/>
<rect x="652.7" y="603.4" width="1.6" height="47.3" fill="url(#tg3)" opacity="0.85"/>
<rect x="681.6" y="600.6" width="1.6" height="50.1" fill="url(#tg2)" opacity="0.85"/>
<rect x="695.6" y="607.8" width="1.6" height="42.9" fill="url(#tg2)" opacity="0.85"/>
<rect x="708.9" y="607.4" width="1.6" height="43.3" fill="url(#tg3)" opacity="0.85"/>
</g>
</g></g>
<rect x="124.7" y="595.7" width="616.6" height="64.6" fill="none" rx="4" stroke="#a9a9a9" stroke-width="1.4" />
<rect x="745" y="595" width="642" height="66" fill="#6f3a70" rx="4" />
<g><clipPath id="tc3"><rect x="745" y="595" width="116" height="66" rx="3"/></clipPath><g clip-path="url(#tc3)">
<rect x="745" y="595" width="116" height="66" fill="#040216" />
<ellipse cx="808.8" cy="618.76" rx="31.32" ry="22.44" fill="#0d1248" filter="url(#blur3)" opacity="0.7"/>
<ellipse cx="803.0" cy="641.2" rx="49.88" ry="6.6000000000000005" fill="#7a2fa0" filter="url(#blur3)" opacity="0.8"/>
<g filter="url(#blur1)">
<rect x="748.3" y="631.7" width="1.7" height="13.2" fill="url(#tg1)" opacity="0.56"/>
<rect x="749.5" y="626.2" width="1.7" height="20.2" fill="url(#tg1)" opacity="0.69"/>
<rect x="750.6" y="629.5" width="1.7" height="17.4" fill="url(#tg1)" opacity="0.71"/>
<rect x="751.8" y="623.0" width="1.7" height="21.5" fill="url(#tg1)" opacity="0.75"/>
<rect x="753.0" y="632.7" width="1.7" height="14.6" fill="url(#tg1)" opacity="0.83"/>
<rect x="754.2" y="622.0" width="1.7" height="25.3" fill="url(#tg1)" opacity="0.88"/>
<rect x="755.3" y="627.5" width="1.7" height="19.5" fill="url(#tg3)" opacity="0.48"/>
<rect x="756.5" y="630.5" width="1.7" height="14.7" fill="url(#tg1)" opacity="0.58"/>
<rect x="757.7" y="631.9" width="1.7" height="12.8" fill="url(#tg1)" opacity="0.75"/>
<rect x="758.9" y="627.5" width="1.7" height="19.1" fill="url(#tg1)" opacity="0.99"/>
<rect x="760.0" y="630.5" width="1.7" height="15.7" fill="url(#tg1)" opacity="0.94"/>
<rect x="761.2" y="629.3" width="1.7" height="14.4" fill="url(#tg1)" opacity="0.74"/>
<rect x="762.4" y="631.6" width="1.7" height="14.3" fill="url(#tg1)" opacity="0.45"/>
<rect x="763.6" y="624.4" width="1.7" height="18.8" fill="url(#tg1)" opacity="0.86"/>
<rect x="764.7" y="626.0" width="1.7" height="18.8" fill="url(#tg3)" opacity="0.83"/>
<rect x="765.9" y="624.1" width="1.7" height="21.8" fill="url(#tg1)" opacity="1.00"/>
<rect x="767.1" y="630.2" width="1.7" height="14.2" fill="url(#tg3)" opacity="0.52"/>
<rect x="768.3" y="626.8" width="1.7" height="15.9" fill="url(#tg3)" opacity="0.92"/>
<rect x="769.4" y="626.5" width="1.7" height="18.9" fill="url(#tg1)" opacity="0.68"/>
<rect x="770.6" y="626.4" width="1.7" height="17.8" fill="url(#tg1)" opacity="0.77"/>
<rect x="771.8" y="620.2" width="1.7" height="23.4" fill="url(#tg1)" opacity="0.54"/>
<rect x="773.0" y="621.9" width="1.7" height="22.0" fill="url(#tg1)" opacity="0.41"/>
<rect x="774.1" y="621.7" width="1.7" height="20.3" fill="url(#tg1)" opacity="0.78"/>
<rect x="775.3" y="619.9" width="1.7" height="23.8" fill="url(#tg1)" opacity="0.61"/>
<rect x="776.5" y="614.4" width="1.7" height="27.6" fill="url(#tg3)" opacity="0.81"/>
<rect x="777.6" y="616.1" width="1.7" height="27.6" fill="url(#tg1)" opacity="0.59"/>
<rect x="778.8" y="623.6" width="1.7" height="20.0" fill="url(#tg1)" opacity="0.58"/>
<rect x="780.0" y="620.9" width="1.7" height="21.5" fill="url(#tg1)" opacity="0.59"/>
<rect x="781.2" y="623.5" width="1.7" height="19.9" fill="url(#tg2)" opacity="0.82"/>
<rect x="782.3" y="627.6" width="1.7" height="16.4" fill="url(#tg1)" opacity="0.91"/>
<rect x="783.5" y="627.7" width="1.7" height="18.0" fill="url(#tg1)" opacity="0.54"/>
<rect x="784.7" y="626.0" width="1.7" height="18.1" fill="url(#tg1)" opacity="0.51"/>
<rect x="785.9" y="622.6" width="1.7" height="23.8" fill="url(#tg1)" opacity="0.48"/>
<rect x="787.0" y="621.0" width="1.7" height="24.3" fill="url(#tg2)" opacity="0.65"/>
<rect x="788.2" y="618.8" width="1.7" height="26.4" fill="url(#tg2)" opacity="0.93"/>
<rect x="789.4" y="613.4" width="1.7" height="36.4" fill="url(#tg1)" opacity="0.85"/>
<rect x="790.6" y="617.5" width="1.7" height="30.8" fill="url(#tg2)" opacity="0.54"/>
<rect x="791.7" y="627.1" width="1.7" height="20.6" fill="url(#tg3)" opacity="0.94"/>
<rect x="792.9" y="624.9" width="1.7" height="27.2" fill="url(#tg1)" opacity="0.41"/>
<rect x="794.1" y="625.6" width="1.7" height="23.7" fill="url(#tg1)" opacity="0.65"/>
<rect x="795.3" y="619.6" width="1.7" height="30.7" fill="url(#tg2)" opacity="0.69"/>
<rect x="796.4" y="622.5" width="1.7" height="27.6" fill="url(#tg1)" opacity="0.50"/>
<rect x="797.6" y="615.9" width="1.7" height="39.3" fill="url(#tg3)" opacity="0.78"/>
<rect x="798.8" y="620.5" width="1.7" height="31.5" fill="url(#tg2)" opacity="0.65"/>
<rect x="800.0" y="614.5" width="1.7" height="35.9" fill="url(#tg2)" opacity="0.47"/>
<rect x="801.1" y="612.3" width="1.7" height="45.5" fill="url(#tg2)" opacity="0.59"/>
<rect x="802.3" y="621.0" width="1.7" height="35.5" fill="url(#tg1)" opacity="0.51"/>
<rect x="803.5" y="626.4" width="1.7" height="29.8" fill="url(#tg1)" opacity="0.45"/>
<rect x="804.6" y="623.9" width="1.7" height="32.8" fill="url(#tg1)" opacity="0.88"/>
<rect x="805.8" y="621.2" width="1.7" height="33.7" fill="url(#tg1)" opacity="0.65"/>
<rect x="807.0" y="619.7" width="1.7" height="34.1" fill="url(#tg1)" opacity="0.44"/>
<rect x="808.2" y="622.4" width="1.7" height="36.4" fill="url(#tg1)" opacity="0.94"/>
<rect x="809.3" y="617.9" width="1.7" height="37.2" fill="url(#tg2)" opacity="0.80"/>
<rect x="810.5" y="605.6" width="1.7" height="50.6" fill="url(#tg1)" opacity="0.46"/>
<rect x="811.7" y="629.0" width="1.7" height="22.8" fill="url(#tg3)" opacity="0.46"/>
<rect x="812.9" y="613.3" width="1.7" height="38.3" fill="url(#tg2)" opacity="0.47"/>
<rect x="814.0" y="611.5" width="1.7" height="44.0" fill="url(#tg1)" opacity="0.88"/>
<rect x="815.2" y="621.9" width="1.7" height="30.8" fill="url(#tg3)" opacity="0.85"/>
<rect x="816.4" y="621.9" width="1.7" height="29.1" fill="url(#tg1)" opacity="0.55"/>
<rect x="817.6" y="631.3" width="1.7" height="20.8" fill="url(#tg1)" opacity="0.62"/>
<rect x="818.7" y="631.2" width="1.7" height="19.1" fill="url(#tg2)" opacity="0.98"/>
<rect x="819.9" y="630.1" width="1.7" height="18.4" fill="url(#tg1)" opacity="0.80"/>
<rect x="821.1" y="628.8" width="1.7" height="21.5" fill="url(#tg1)" opacity="0.46"/>
<rect x="822.3" y="622.2" width="1.7" height="27.1" fill="url(#tg1)" opacity="0.51"/>
<rect x="823.4" y="630.0" width="1.7" height="19.1" fill="url(#tg2)" opacity="0.81"/>
<rect x="824.6" y="620.3" width="1.7" height="28.9" fill="url(#tg1)" opacity="0.75"/>
<rect x="825.8" y="630.2" width="1.7" height="15.8" fill="url(#tg1)" opacity="0.50"/>
<rect x="827.0" y="630.0" width="1.7" height="18.7" fill="url(#tg2)" opacity="0.69"/>
<rect x="828.1" y="629.0" width="1.7" height="19.6" fill="url(#tg1)" opacity="0.73"/>
<rect x="829.3" y="630.3" width="1.7" height="18.2" fill="url(#tg1)" opacity="0.84"/>
<rect x="830.5" y="623.7" width="1.7" height="22.1" fill="url(#tg1)" opacity="0.83"/>
<rect x="831.6" y="626.1" width="1.7" height="21.7" fill="url(#tg1)" opacity="0.51"/>
<rect x="832.8" y="630.6" width="1.7" height="16.5" fill="url(#tg1)" opacity="0.94"/>
<rect x="834.0" y="623.3" width="1.7" height="22.1" fill="url(#tg1)" opacity="0.84"/>
<rect x="835.2" y="630.2" width="1.7" height="17.0" fill="url(#tg1)" opacity="0.61"/>
<rect x="836.3" y="620.1" width="1.7" height="23.7" fill="url(#tg1)" opacity="0.66"/>
<rect x="837.5" y="626.7" width="1.7" height="19.1" fill="url(#tg1)" opacity="0.63"/>
<rect x="838.7" y="628.3" width="1.7" height="16.2" fill="url(#tg1)" opacity="0.47"/>
<rect x="839.9" y="617.7" width="1.7" height="25.9" fill="url(#tg1)" opacity="0.62"/>
<rect x="841.0" y="622.3" width="1.7" height="21.8" fill="url(#tg1)" opacity="0.79"/>
<rect x="842.2" y="625.5" width="1.7" height="20.2" fill="url(#tg1)" opacity="0.80"/>
<rect x="843.4" y="629.6" width="1.7" height="15.0" fill="url(#tg1)" opacity="0.83"/>
<rect x="844.6" y="624.5" width="1.7" height="18.8" fill="url(#tg1)" opacity="0.78"/>
<rect x="845.7" y="623.7" width="1.7" height="21.2" fill="url(#tg1)" opacity="0.96"/>
<rect x="846.9" y="627.0" width="1.7" height="18.0" fill="url(#tg1)" opacity="0.73"/>
<rect x="848.1" y="623.7" width="1.7" height="19.7" fill="url(#tg1)" opacity="0.44"/>
<rect x="849.3" y="621.7" width="1.7" height="22.4" fill="url(#tg1)" opacity="0.62"/>
<rect x="850.4" y="628.1" width="1.7" height="17.2" fill="url(#tg3)" opacity="0.70"/>
<rect x="851.6" y="628.5" width="1.7" height="14.8" fill="url(#tg1)" opacity="0.64"/>
<rect x="852.8" y="629.4" width="1.7" height="13.8" fill="url(#tg1)" opacity="0.47"/>
<rect x="854.0" y="631.7" width="1.7" height="10.6" fill="url(#tg1)" opacity="0.84"/>
<rect x="855.1" y="631.8" width="1.7" height="11.6" fill="url(#tg1)" opacity="0.89"/>
<rect x="856.3" y="627.5" width="1.7" height="14.9" fill="url(#tg1)" opacity="0.52"/>
<rect x="772.1" y="603.5" width="1.6" height="48.3" fill="url(#tg3)" opacity="0.85"/>
<rect x="800.3" y="600.9" width="1.6" height="50.8" fill="url(#tg2)" opacity="0.85"/>
<rect x="816.8" y="599.2" width="1.6" height="52.6" fill="url(#tg2)" opacity="0.85"/>
<rect x="830.2" y="606.0" width="1.6" height="45.7" fill="url(#tg3)" opacity="0.85"/>
</g>
</g></g>
<g><clipPath id="tc4"><rect x="1268" y="595" width="119" height="66" rx="3"/></clipPath><g clip-path="url(#tc4)">
<rect x="1268" y="595" width="119" height="66" fill="#040216" />
<ellipse cx="1333.45" cy="618.76" rx="32.13" ry="22.44" fill="#0d1248" filter="url(#blur3)" opacity="0.7"/>
<ellipse cx="1327.5" cy="641.2" rx="51.17" ry="6.6000000000000005" fill="#7a2fa0" filter="url(#blur3)" opacity="0.8"/>
<g filter="url(#blur1)">
<rect x="1271.3" y="628.2" width="1.7" height="19.7" fill="url(#tg1)" opacity="0.86"/>
<rect x="1272.5" y="628.5" width="1.7" height="16.9" fill="url(#tg1)" opacity="0.46"/>
<rect x="1273.6" y="628.4" width="1.7" height="18.8" fill="url(#tg1)" opacity="0.88"/>
<rect x="1274.8" y="631.9" width="1.7" height="14.4" fill="url(#tg1)" opacity="0.91"/>
<rect x="1276.0" y="628.0" width="1.7" height="18.1" fill="url(#tg1)" opacity="0.70"/>
<rect x="1277.1" y="631.0" width="1.7" height="13.0" fill="url(#tg1)" opacity="0.92"/>
<rect x="1278.3" y="629.7" width="1.7" height="17.2" fill="url(#tg1)" opacity="0.93"/>
<rect x="1279.5" y="624.3" width="1.7" height="20.5" fill="url(#tg1)" opacity="0.66"/>
<rect x="1280.6" y="629.5" width="1.7" height="16.7" fill="url(#tg3)" opacity="0.43"/>
<rect x="1281.8" y="627.8" width="1.7" height="17.2" fill="url(#tg1)" opacity="0.61"/>
<rect x="1283.0" y="623.1" width="1.7" height="21.2" fill="url(#tg1)" opacity="0.78"/>
<rect x="1284.2" y="630.4" width="1.7" height="15.1" fill="url(#tg1)" opacity="0.74"/>
<rect x="1285.3" y="626.4" width="1.7" height="16.4" fill="url(#tg1)" opacity="0.86"/>
<rect x="1286.5" y="630.2" width="1.7" height="13.4" fill="url(#tg1)" opacity="0.68"/>
<rect x="1287.7" y="631.5" width="1.7" height="14.1" fill="url(#tg1)" opacity="0.84"/>
<rect x="1288.8" y="625.1" width="1.7" height="18.2" fill="url(#tg1)" opacity="0.87"/>
<rect x="1290.0" y="626.8" width="1.7" height="17.6" fill="url(#tg1)" opacity="0.58"/>
<rect x="1291.2" y="627.0" width="1.7" height="15.5" fill="url(#tg1)" opacity="0.98"/>
<rect x="1292.3" y="630.8" width="1.7" height="11.3" fill="url(#tg1)" opacity="0.87"/>
<rect x="1293.5" y="625.4" width="1.7" height="16.9" fill="url(#tg1)" opacity="0.65"/>
<rect x="1294.7" y="629.1" width="1.7" height="13.0" fill="url(#tg1)" opacity="0.81"/>
<rect x="1295.8" y="629.7" width="1.7" height="14.0" fill="url(#tg1)" opacity="1.00"/>
<rect x="1297.0" y="624.3" width="1.7" height="20.5" fill="url(#tg1)" opacity="0.99"/>
<rect x="1298.2" y="626.6" width="1.7" height="16.8" fill="url(#tg3)" opacity="0.65"/>
<rect x="1299.3" y="623.6" width="1.7" height="21.5" fill="url(#tg1)" opacity="0.42"/>
<rect x="1300.5" y="627.4" width="1.7" height="15.4" fill="url(#tg1)" opacity="0.92"/>
<rect x="1301.7" y="629.4" width="1.7" height="16.3" fill="url(#tg1)" opacity="0.99"/>
<rect x="1302.8" y="618.9" width="1.7" height="25.9" fill="url(#tg1)" opacity="0.85"/>
<rect x="1304.0" y="626.5" width="1.7" height="16.8" fill="url(#tg1)" opacity="0.95"/>
<rect x="1305.2" y="618.5" width="1.7" height="27.3" fill="url(#tg1)" opacity="0.72"/>
<rect x="1306.4" y="616.1" width="1.7" height="27.8" fill="url(#tg1)" opacity="0.44"/>
<rect x="1307.5" y="609.0" width="1.7" height="36.9" fill="url(#tg2)" opacity="0.48"/>
<rect x="1308.7" y="614.0" width="1.7" height="29.7" fill="url(#tg2)" opacity="0.74"/>
<rect x="1309.9" y="620.8" width="1.7" height="24.0" fill="url(#tg2)" opacity="0.41"/>
<rect x="1311.0" y="623.0" width="1.7" height="25.0" fill="url(#tg1)" opacity="0.73"/>
<rect x="1312.2" y="623.0" width="1.7" height="25.0" fill="url(#tg2)" opacity="0.86"/>
<rect x="1313.4" y="628.4" width="1.7" height="16.9" fill="url(#tg2)" opacity="0.69"/>
<rect x="1314.5" y="620.5" width="1.7" height="26.0" fill="url(#tg1)" opacity="0.71"/>
<rect x="1315.7" y="624.5" width="1.7" height="26.4" fill="url(#tg2)" opacity="0.63"/>
<rect x="1316.9" y="620.3" width="1.7" height="27.9" fill="url(#tg1)" opacity="0.46"/>
<rect x="1318.0" y="622.4" width="1.7" height="30.6" fill="url(#tg1)" opacity="0.91"/>
<rect x="1319.2" y="623.2" width="1.7" height="30.7" fill="url(#tg2)" opacity="0.90"/>
<rect x="1320.4" y="621.7" width="1.7" height="28.2" fill="url(#tg1)" opacity="0.49"/>
<rect x="1321.5" y="625.8" width="1.7" height="27.4" fill="url(#tg1)" opacity="0.40"/>
<rect x="1322.7" y="627.1" width="1.7" height="26.5" fill="url(#tg1)" opacity="0.45"/>
<rect x="1323.9" y="626.4" width="1.7" height="26.8" fill="url(#tg1)" opacity="0.78"/>
<rect x="1325.0" y="622.2" width="1.7" height="31.3" fill="url(#tg1)" opacity="0.95"/>
<rect x="1326.2" y="621.3" width="1.7" height="36.5" fill="url(#tg1)" opacity="0.48"/>
<rect x="1327.4" y="617.1" width="1.7" height="40.0" fill="url(#tg3)" opacity="0.49"/>
<rect x="1328.6" y="617.6" width="1.7" height="41.8" fill="url(#tg1)" opacity="0.61"/>
<rect x="1329.7" y="623.1" width="1.7" height="32.3" fill="url(#tg1)" opacity="0.79"/>
<rect x="1330.9" y="619.8" width="1.7" height="32.4" fill="url(#tg2)" opacity="0.90"/>
<rect x="1332.1" y="605.7" width="1.7" height="54.0" fill="url(#tg2)" opacity="0.70"/>
<rect x="1333.2" y="611.5" width="1.7" height="46.3" fill="url(#tg3)" opacity="0.79"/>
<rect x="1334.4" y="615.8" width="1.7" height="40.5" fill="url(#tg1)" opacity="0.96"/>
<rect x="1335.6" y="622.9" width="1.7" height="35.0" fill="url(#tg1)" opacity="0.54"/>
<rect x="1336.7" y="624.4" width="1.7" height="33.5" fill="url(#tg1)" opacity="0.64"/>
<rect x="1337.9" y="621.0" width="1.7" height="32.2" fill="url(#tg2)" opacity="0.72"/>
<rect x="1339.1" y="619.8" width="1.7" height="32.5" fill="url(#tg1)" opacity="0.49"/>
<rect x="1340.2" y="619.3" width="1.7" height="36.3" fill="url(#tg1)" opacity="0.59"/>
<rect x="1341.4" y="626.4" width="1.7" height="23.9" fill="url(#tg1)" opacity="0.87"/>
<rect x="1342.6" y="627.0" width="1.7" height="23.2" fill="url(#tg1)" opacity="0.87"/>
<rect x="1343.7" y="621.0" width="1.7" height="32.1" fill="url(#tg2)" opacity="0.49"/>
<rect x="1344.9" y="632.2" width="1.7" height="16.9" fill="url(#tg3)" opacity="1.00"/>
<rect x="1346.1" y="628.5" width="1.7" height="22.0" fill="url(#tg1)" opacity="0.97"/>
<rect x="1347.2" y="624.8" width="1.7" height="24.5" fill="url(#tg1)" opacity="0.73"/>
<rect x="1348.4" y="632.1" width="1.7" height="18.0" fill="url(#tg3)" opacity="0.50"/>
<rect x="1349.6" y="626.5" width="1.7" height="21.2" fill="url(#tg1)" opacity="0.60"/>
<rect x="1350.8" y="631.5" width="1.7" height="14.3" fill="url(#tg3)" opacity="0.98"/>
<rect x="1351.9" y="631.7" width="1.7" height="17.2" fill="url(#tg1)" opacity="0.73"/>
<rect x="1353.1" y="625.5" width="1.7" height="20.3" fill="url(#tg1)" opacity="1.00"/>
<rect x="1354.3" y="620.1" width="1.7" height="28.4" fill="url(#tg1)" opacity="0.91"/>
<rect x="1355.4" y="619.9" width="1.7" height="25.1" fill="url(#tg1)" opacity="0.95"/>
<rect x="1356.6" y="624.9" width="1.7" height="22.9" fill="url(#tg1)" opacity="0.42"/>
<rect x="1357.8" y="627.0" width="1.7" height="20.4" fill="url(#tg1)" opacity="0.58"/>
<rect x="1358.9" y="621.3" width="1.7" height="23.9" fill="url(#tg1)" opacity="0.93"/>
<rect x="1360.1" y="621.0" width="1.7" height="25.2" fill="url(#tg1)" opacity="0.76"/>
<rect x="1361.3" y="625.1" width="1.7" height="19.7" fill="url(#tg3)" opacity="0.83"/>
<rect x="1362.4" y="626.3" width="1.7" height="19.3" fill="url(#tg1)" opacity="0.52"/>
<rect x="1363.6" y="624.0" width="1.7" height="22.6" fill="url(#tg1)" opacity="0.47"/>
<rect x="1364.8" y="614.0" width="1.7" height="30.9" fill="url(#tg3)" opacity="0.91"/>
<rect x="1365.9" y="620.1" width="1.7" height="22.9" fill="url(#tg1)" opacity="0.42"/>
<rect x="1367.1" y="627.1" width="1.7" height="16.9" fill="url(#tg1)" opacity="0.85"/>
<rect x="1368.3" y="621.7" width="1.7" height="22.3" fill="url(#tg1)" opacity="0.42"/>
<rect x="1369.4" y="620.8" width="1.7" height="24.4" fill="url(#tg1)" opacity="0.58"/>
<rect x="1370.6" y="622.5" width="1.7" height="22.4" fill="url(#tg1)" opacity="0.50"/>
<rect x="1371.8" y="626.9" width="1.7" height="18.8" fill="url(#tg1)" opacity="0.85"/>
<rect x="1373.0" y="628.6" width="1.7" height="16.6" fill="url(#tg1)" opacity="0.77"/>
<rect x="1374.1" y="629.7" width="1.7" height="12.5" fill="url(#tg1)" opacity="0.57"/>
<rect x="1375.3" y="625.0" width="1.7" height="19.7" fill="url(#tg3)" opacity="0.99"/>
<rect x="1376.5" y="630.7" width="1.7" height="12.0" fill="url(#tg1)" opacity="0.80"/>
<rect x="1377.6" y="622.3" width="1.7" height="20.0" fill="url(#tg1)" opacity="0.67"/>
<rect x="1378.8" y="622.2" width="1.7" height="20.6" fill="url(#tg1)" opacity="0.47"/>
<rect x="1380.0" y="621.7" width="1.7" height="22.2" fill="url(#tg1)" opacity="0.94"/>
<rect x="1381.1" y="626.8" width="1.7" height="15.8" fill="url(#tg1)" opacity="0.42"/>
<rect x="1382.3" y="627.2" width="1.7" height="15.4" fill="url(#tg3)" opacity="0.59"/>
<rect x="1295.4" y="606.7" width="1.6" height="45.0" fill="url(#tg3)" opacity="0.85"/>
<rect x="1325.8" y="601.8" width="1.6" height="49.9" fill="url(#tg2)" opacity="0.85"/>
<rect x="1342.1" y="600.3" width="1.6" height="51.4" fill="url(#tg2)" opacity="0.85"/>
<rect x="1354.0" y="606.5" width="1.6" height="45.2" fill="url(#tg3)" opacity="0.85"/>
</g>
</g></g>
<rect x="283" y="548" width="2.6" height="145" fill="#43699f" />
<rect x="246.5" y="525.5" width="75" height="24.5" fill="#4472b9" rx="4" />
<path d="M279 549 L284.3 554.5 L289.6 549 Z" stroke="none" stroke-width="0" fill="#4472b9" stroke-linecap="round" stroke-linejoin="round" />
<text x="284.3" y="543" font-size="14.5" fill="#ffffff" text-anchor="middle" font-weight="bold" textLength="67" lengthAdjust="spacingAndGlyphs" >00:00+06</text>
</g>
<text x="721" y="722" font-size="21.5" fill="#b6b6b6" text-anchor="middle" textLength="914" lengthAdjust="spacingAndGlyphs" stroke="#b6b6b6" stroke-width="0.35" >Simple transition using the strip’s start and end frames to control the size of an ellipse mask.</text>
<rect x="23.5" y="19" width="39.5" height="24" fill="#252525" rx="5" />
<g transform="translate(28.5,21.3)">
<path d="M1 6 V17 H12" stroke="#8a8a8a" stroke-width="1.2" fill="none"/>
<path d="M3.5 3.5 V14.5 H14.5" stroke="#b0b0b0" stroke-width="1.2" fill="none"/>
<rect x="6" y="0.8" width="11.5" height="11.5" rx="1.2" fill="#e0e0e0"/>
<path d="M7 1.8 H16.5 L7 11.3 Z" fill="#1c1c1c"/>
</g>
<path d="M50.9 30.7 L54.5 34.3 L58.1 30.7" stroke="#d0d0d0" stroke-width="1.6" fill="none" stroke-linecap="round" stroke-linejoin="round" />
<rect x="69" y="19" width="121" height="24" fill="#242424" rx="5" />
<g transform="translate(74.3,21) scale(1.0)" fill="#e6e6e6">
<rect x="1.6" y="12.2" width="16" height="7.6" rx="0.8"/>
<rect x="5" y="8.8" width="12.6" height="1.7" rx="0.4" opacity="0.9"/>
<rect x="0.4" y="5.6" width="2.4" height="5" rx="0.8" fill="none" stroke="#e6e6e6" stroke-width="0.9" opacity="0.85"/>
<g transform="rotate(-18 5 7)"><rect x="5" y="3.6" width="3" height="3" rx="0.9"/><rect x="9.4" y="3.6" width="3" height="3" rx="0.9"/><rect x="13.8" y="3.6" width="3" height="3" rx="0.9"/></g>
</g>
<text x="101" y="36" font-size="15" fill="#cdcdcd" textLength="71" lengthAdjust="spacingAndGlyphs" stroke="#cdcdcd" stroke-width="0.35" >Sequencer</text>
<path d="M177.4 30.7 L181 34.3 L184.6 30.7" stroke="#d0d0d0" stroke-width="1.6" fill="none" stroke-linecap="round" stroke-linejoin="round" />
<text x="204" y="36" font-size="15" fill="#cdcdcd" textLength="33" lengthAdjust="spacingAndGlyphs" stroke="#cdcdcd" stroke-width="0.35" >View</text>
<text x="256" y="36" font-size="15" fill="#cdcdcd" textLength="42" lengthAdjust="spacingAndGlyphs" stroke="#cdcdcd" stroke-width="0.35" >Select</text>
<text x="316" y="36" font-size="15" fill="#cdcdcd" textLength="28" lengthAdjust="spacingAndGlyphs" stroke="#cdcdcd" stroke-width="0.35" >Add</text>
<text x="363" y="36" font-size="15" fill="#cdcdcd" textLength="37" lengthAdjust="spacingAndGlyphs" stroke="#cdcdcd" stroke-width="0.35" >Node</text>
<rect x="430" y="19" width="329.5" height="24" fill="#242424" rx="5" />
<rect x="469" y="19" width="215" height="24" fill="#1b1b1b" />
<g transform="translate(435,21)">
<path d="M1 6 V17 H12" stroke="#8a8a8a" stroke-width="1.2" fill="none"/>
<path d="M3.5 3.5 V14.5 H14.5" stroke="#b0b0b0" stroke-width="1.2" fill="none"/>
<rect x="6" y="0.8" width="11.5" height="11.5" rx="1.2" fill="#e0e0e0"/>
<path d="M7.5 10.5 L11 5.5 L13 8.3 L14.2 7 L16.3 10.5 Z" fill="#1c1c1c"/><circle cx="14.6" cy="3.8" r="1" fill="#1c1c1c"/>
</g>
<path d="M456.4 30.7 L460 34.3 L463.6 30.7" stroke="#d0d0d0" stroke-width="1.6" fill="none" stroke-linecap="round" stroke-linejoin="round" />
<text x="477" y="36" font-size="15" fill="#cdcdcd" textLength="200" lengthAdjust="spacingAndGlyphs" stroke="#cdcdcd" stroke-width="0.35" >Sequencer Compositor Nodes</text>
<rect x="684.5" y="19" width="24" height="24" fill="#3a3a3a" />
<rect x="709.5" y="19" width="25" height="24" fill="#3a3a3a" />
<rect x="735.5" y="19" width="24" height="24" fill="#3a3a3a" rx="4" />
<rect x="735.5" y="19" width="8" height="24" fill="#3a3a3a" />
<path d="M696.5 23.5 C699 25 702 25.6 704 25.6 V31 C704 35.5 700.5 38.5 696.5 40 C692.5 38.5 689 35.5 689 31 V25.6 C691 25.6 694 25 696.5 23.5 Z" stroke="#bdbdbd" stroke-width="1.3" fill="none" stroke-linecap="round" stroke-linejoin="round" />
<path d="M718 24 H726 L729.5 27.5 V36.5 H718 Z" stroke="#e0e0e0" stroke-width="1.4" fill="none" stroke-linecap="round" stroke-linejoin="round" />
<path d="M715 28 V39.5 H725" stroke="#e0e0e0" stroke-width="1.4" fill="none" stroke-linecap="round" stroke-linejoin="round" />
<path d="M742.5 26.5 L751.5 35.5 M751.5 26.5 L742.5 35.5" stroke="#e0e0e0" stroke-width="1.6" fill="none" stroke-linecap="round" stroke-linejoin="round" />
<g transform="translate(778,31) rotate(40)" stroke="#a8a8a8" stroke-width="1.4" fill="none" stroke-linejoin="round" stroke-linecap="round"><path d="M-3 -9 H3 L2.3 -2.5 L5 1 H-5 L-2.3 -2.5 Z"/><path d="M0 1 V9"/></g>
<rect x="858" y="19" width="24.5" height="24" fill="#3b3b3b" rx="4" />
<path d="M864 35 C864 27 866 24.5 871 24.5 C876 24.5 878 27.5 878 30.5 C878 34 875.5 36.5 872.5 38.5 M867.5 33.5 C867.5 29.5 869 28 871 28 C873.5 28 874.5 29.5 874.5 31 C874.5 33 872.5 34.5 871 35.5" stroke="#9a9a9a" stroke-width="1.5" fill="none" stroke-linecap="round" stroke-linejoin="round" />
<rect x="888.5" y="19" width="25.5" height="24" fill="#3f6fb6" rx="4" />
<rect x="906" y="19" width="8" height="24" fill="#3f6fb6" />
<rect x="914" y="19" width="23.5" height="24" fill="#242424" rx="4" />
<rect x="914" y="19" width="8" height="24" fill="#242424" />
<circle cx="904" cy="28" r="6.3" fill="#f0f0f0"/>
<path d="M899.5 24 L904 28 L907 22.5" stroke="#3f6fb6" stroke-width="1.3" fill="none" stroke-linecap="round" stroke-linejoin="round" />
<circle cx="904" cy="28" r="1.2" fill="#3f6fb6"/>
<path d="M901 31.5 A5.3 5.3 0 1 1 896 28.8" stroke="#f0f0f0" stroke-width="1.8" fill="none" stroke-linecap="round" stroke-linejoin="round" />
<path d="M921.9 30.2 L925.5 33.8 L929.1 30.2" stroke="#d0d0d0" stroke-width="1.6" fill="none" stroke-linecap="round" stroke-linejoin="round" />
<g transform="translate(36,64.5)" stroke="#e2e2e2" fill="none" stroke-width="1.9" stroke-linejoin="round">
<rect x="1" y="4.2" width="16.6" height="12.6" rx="1.8"/><path d="M5 4 V1.6 H10.5 V4"/><path d="M13 4.5 V16.5"/><rect x="13.5" y="5" width="3.5" height="11" fill="#bdbdbd" stroke="none"/>
<circle cx="15.3" cy="8" r="0.8" fill="#222" stroke="none"/><circle cx="15.3" cy="13" r="0.8" fill="#222" stroke="none"/>
</g>
<text x="65" y="78" font-size="15" fill="#cdcdcd" textLength="26" lengthAdjust="spacingAndGlyphs" stroke="#cdcdcd" stroke-width="0.35" >Edit</text>
<path d="M111.5 67.8 L117.5 73.8 L111.5 79.8" stroke="#cfcfcf" stroke-width="2" fill="none" stroke-linecap="round" stroke-linejoin="round" />
<rect x="136.5" y="66.3" width="12.5" height="4.8" fill="#e8e8e8" rx="0.8" />
<rect x="130.5" y="74.6" width="14" height="4.8" fill="#e8e8e8" rx="0.8" />
<text x="160" y="78" font-size="15" fill="#cdcdcd" textLength="115" lengthAdjust="spacingAndGlyphs" stroke="#cdcdcd" stroke-width="0.35" >bcon25_wall.png</text>
<path d="M295.0 67.8 L301.0 73.8 L295.0 79.8" stroke="#cfcfcf" stroke-width="2" fill="none" stroke-linecap="round" stroke-linejoin="round" />
<g transform="translate(314,64.5)">
<path d="M1 6 V17 H12" stroke="#8a8a8a" stroke-width="1.2" fill="none"/>
<path d="M3.5 3.5 V14.5 H14.5" stroke="#b0b0b0" stroke-width="1.2" fill="none"/>
<rect x="6" y="0.8" width="11.5" height="11.5" rx="1.2" fill="#e0e0e0"/>
<path d="M7.5 10.5 L11 5.5 L13 8.3 L14.2 7 L16.3 10.5 Z" fill="#1c1c1c"/><circle cx="14.6" cy="3.8" r="1" fill="#1c1c1c"/>
</g>
<text x="343" y="78" font-size="15" fill="#cdcdcd" textLength="200" lengthAdjust="spacingAndGlyphs" stroke="#cdcdcd" stroke-width="0.35" >Sequencer Compositor Nodes</text>
<rect x="941" y="49" width="5" height="455" fill="#262626" rx="2.5" />
<rect x="936" y="77" width="11" height="17" fill="#1c1c1c" rx="3" />
<rect x="951" y="77" width="12" height="17" fill="#141414" rx="3" />
<path d="M944.5 80.5 L940.5 85 L944.5 89.5" stroke="#9a9a9a" stroke-width="1.5" fill="none" stroke-linecap="round" stroke-linejoin="round" />
<path d="M955 80.5 L959 85 L955 89.5" stroke="#b0b0b0" stroke-width="1.5" fill="none" stroke-linecap="round" stroke-linejoin="round" />
<path d="M906.5 517 L910.5 513 L914.5 517" stroke="#b4b4b4" stroke-width="2" fill="none" stroke-linecap="round" stroke-linejoin="round" />
<g transform="translate(965.5,21) scale(1.0)" fill="#e6e6e6">
<rect x="1.6" y="12.2" width="16" height="7.6" rx="0.8"/>
<rect x="5" y="8.8" width="12.6" height="1.7" rx="0.4" opacity="0.9"/>
<rect x="0.4" y="5.6" width="2.4" height="5" rx="0.8" fill="none" stroke="#e6e6e6" stroke-width="0.9" opacity="0.85"/>
<g transform="rotate(-18 5 7)"><rect x="5" y="3.6" width="3" height="3" rx="0.9"/><rect x="9.4" y="3.6" width="3" height="3" rx="0.9"/><rect x="13.8" y="3.6" width="3" height="3" rx="0.9"/></g>
</g>
<path d="M989.4 30.7 L993 34.3 L996.6 30.7" stroke="#d0d0d0" stroke-width="1.6" fill="none" stroke-linecap="round" stroke-linejoin="round" />
<rect x="1006" y="19" width="191" height="24" fill="#232323" rx="5" />
<g transform="translate(1013,22)" stroke="#dedede" fill="none" stroke-width="1.4" stroke-linejoin="round"><rect x="0.7" y="0.7" width="16.6" height="16.6" rx="1.5"/><path d="M3.5 17 L8 9.5 L12.5 17" /><circle cx="12.8" cy="5.2" r="1" fill="#dedede" stroke="none"/></g>
<text x="1040" y="36" font-size="15" fill="#cdcdcd" textLength="52" lengthAdjust="spacingAndGlyphs" stroke="#cdcdcd" stroke-width="0.35" >Preview</text>
<path d="M1184.6 30.8 L1188 34.2 L1191.4 30.8" stroke="#d0d0d0" stroke-width="1.6" fill="none" stroke-linecap="round" stroke-linejoin="round" />
<text x="1212" y="36" font-size="15" fill="#cdcdcd" textLength="33" lengthAdjust="spacingAndGlyphs" stroke="#cdcdcd" stroke-width="0.35" >View</text>
<text x="1263" y="36" font-size="15" fill="#cdcdcd" textLength="42" lengthAdjust="spacingAndGlyphs" stroke="#cdcdcd" stroke-width="0.35" >Select</text>
<text x="1324" y="36" font-size="15" fill="#cdcdcd" textLength="31" lengthAdjust="spacingAndGlyphs" stroke="#cdcdcd" stroke-width="0.35" >Strip</text>
<g clip-path="url(#frame)">
<text x="1373" y="36" font-size="15" fill="#cdcdcd" textLength="43" lengthAdjust="spacingAndGlyphs" stroke="#cdcdcd" stroke-width="0.35" >Image</text>
</g>
<path d="M953 147.5 H1420 M953 416.5 H1420" stroke="#2c2c2c" stroke-width="1" stroke-dasharray="2 4" fill="none"/>
<circle cx="1397" cy="76.5" r="15.5" fill="#171717"/>
<circle cx="1397" cy="115" r="15.5" fill="#171717"/>
<rect x="1414" y="77" width="8" height="17" fill="#171717" rx="3" />
<path d="M1419.8 82.5 L1416.8 85.5 L1419.8 88.5 Z" stroke="none" stroke-width="0" fill="#8a8a8a" stroke-linecap="round" stroke-linejoin="round" />
<circle cx="1395" cy="74" r="6.6" fill="#a9a9a9"/>
<path d="M1399.8 79 L1405 84.5" stroke="#a9a9a9" stroke-width="2.6" fill="none" stroke-linecap="round" stroke-linejoin="round" />
<path d="M1391.5 74 H1398.5 M1395 70.5 V77.5" stroke="#171717" stroke-width="1.6" fill="none" stroke-linecap="round" stroke-linejoin="round" />
<g transform="translate(1397,115)" fill="#a9a9a9" stroke="#a9a9a9" stroke-linecap="round"><path d="M-5 4 C-6 1 -8 -1 -9.5 -2 C-8.5 -3.5 -6.5 -2.5 -5 -0.5 L-5 4 Z" stroke-width="1"/><path d="M-4.5 -1 L-5 -7.5 M-1.2 -2 L-1.5 -9.5 M2.2 -2 L2.8 -8.8 M5.2 0 L6.8 -5.8" stroke-width="2.4" fill="none"/><path d="M-5.8 -1 H6.2 C6.5 4 4.5 8 3 9.5 H-3.5 C-5 7 -6 3 -5.8 -1 Z" stroke-width="0.5"/></g>
<defs>
<radialGradient id="bm" cx="0.5" cy="0.5" r="0.5"><stop offset="0" stop-color="#fff"/><stop offset="0.84" stop-color="#fff"/><stop offset="0.93" stop-color="#888"/><stop offset="1" stop-color="#000"/></radialGradient>
<mask id="blobmask"><rect x="950" y="180" width="220" height="220" fill="#000"/><circle cx="1054" cy="286" r="86" fill="url(#bm)"/></mask>
<linearGradient id="bg1" x1="0" y1="0" x2="0" y2="1"><stop offset="0" stop-color="#02020a"/><stop offset="0.22" stop-color="#080a2c"/><stop offset="0.45" stop-color="#161852"/><stop offset="0.62" stop-color="#45288a"/><stop offset="0.8" stop-color="#6a2f9c"/><stop offset="1" stop-color="#3a1560"/></linearGradient>
<linearGradient id="st" x1="0" y1="0" x2="0" y2="1"><stop offset="0" stop-color="#3858c8" stop-opacity="0"/><stop offset="0.3" stop-color="#5a78e0" stop-opacity="0.75"/><stop offset="0.55" stop-color="#dcd0f4" stop-opacity="0.95"/><stop offset="0.8" stop-color="#c890e0" stop-opacity="0.6"/><stop offset="1" stop-color="#b060d0" stop-opacity="0"/></linearGradient>
<linearGradient id="st2" x1="0" y1="0" x2="0" y2="1"><stop offset="0" stop-color="#8050c0" stop-opacity="0"/><stop offset="0.4" stop-color="#d898e0" stop-opacity="0.8"/><stop offset="0.75" stop-color="#c070d0" stop-opacity="0.55"/><stop offset="1" stop-color="#a050c0" stop-opacity="0"/></linearGradient>
<linearGradient id="st3" x1="0" y1="0" x2="0" y2="1"><stop offset="0" stop-color="#4868d8" stop-opacity="0"/><stop offset="0.2" stop-color="#6a8ae8" stop-opacity="0.9"/><stop offset="0.45" stop-color="#ffffff"/><stop offset="0.8" stop-color="#e8c8f0" stop-opacity="0.9"/><stop offset="1" stop-color="#c080d8" stop-opacity="0"/></linearGradient>
<linearGradient id="pk" x1="0" y1="0" x2="0" y2="1"><stop offset="0" stop-color="#d65a84" stop-opacity="0"/><stop offset="0.3" stop-color="#d65a84" stop-opacity="0.9"/><stop offset="0.75" stop-color="#d850a8" stop-opacity="0.8"/><stop offset="1" stop-color="#c050b0" stop-opacity="0"/></linearGradient>
<linearGradient id="hz" x1="0" y1="0" x2="0" y2="1"><stop offset="0" stop-color="#9a58cc" stop-opacity="0"/><stop offset="0.35" stop-color="#a868d4" stop-opacity="0.9"/><stop offset="1" stop-color="#8a3fb8" stop-opacity="0.8"/></linearGradient>
</defs>
<g mask="url(#blobmask)">
<rect x="960" y="195" width="190" height="190" fill="url(#bg1)" />
<g filter="url(#blur2)">
<rect x="970.0" y="325.2" width="3.6" height="46.8" fill="#a060d0" opacity="0.59"/>
<rect x="972.7" y="275.7" width="3.6" height="96.3" fill="#a060d0" opacity="0.40"/>
<rect x="975.3" y="300.7" width="3.6" height="71.3" fill="#8a50c8" opacity="0.52"/>
<rect x="978.0" y="285.2" width="3.6" height="86.8" fill="#7a48c0" opacity="0.31"/>
<rect x="980.7" y="295.6" width="3.6" height="76.4" fill="#7a48c0" opacity="0.26"/>
<rect x="983.3" y="327.4" width="3.6" height="44.6" fill="#6a3cb0" opacity="0.40"/>
<rect x="986.0" y="297.2" width="3.6" height="74.8" fill="#6a3cb0" opacity="0.37"/>
<rect x="988.7" y="270.4" width="3.6" height="101.6" fill="#7a48c0" opacity="0.47"/>
<rect x="991.3" y="302.7" width="3.6" height="69.3" fill="#8a50c8" opacity="0.63"/>
<rect x="994.0" y="283.2" width="3.6" height="88.8" fill="#a060d0" opacity="0.63"/>
<rect x="996.7" y="277.1" width="3.6" height="94.9" fill="#a060d0" opacity="0.46"/>
<rect x="999.3" y="308.3" width="3.6" height="63.7" fill="#8a50c8" opacity="0.52"/>
<rect x="1002.0" y="294.7" width="3.6" height="77.3" fill="#6a3cb0" opacity="0.50"/>
<rect x="1004.7" y="271.3" width="3.6" height="100.7" fill="#8a50c8" opacity="0.44"/>
<rect x="1007.3" y="302.6" width="3.6" height="69.4" fill="#8a50c8" opacity="0.46"/>
<rect x="1010.0" y="270.6" width="3.6" height="101.4" fill="#6a3cb0" opacity="0.24"/>
<rect x="1012.7" y="282.6" width="3.6" height="89.4" fill="#a060d0" opacity="0.56"/>
<rect x="1015.3" y="286.9" width="3.6" height="85.1" fill="#a060d0" opacity="0.60"/>
<rect x="1018.0" y="300.1" width="3.6" height="71.9" fill="#6a3cb0" opacity="0.45"/>
<rect x="1020.7" y="284.0" width="3.6" height="88.0" fill="#7a48c0" opacity="0.48"/>
<rect x="1023.3" y="276.5" width="3.6" height="95.5" fill="#6a3cb0" opacity="0.32"/>
<rect x="1026.0" y="300.6" width="3.6" height="71.4" fill="#7a48c0" opacity="0.62"/>
<rect x="1028.7" y="278.5" width="3.6" height="93.5" fill="#7a48c0" opacity="0.24"/>
<rect x="1031.3" y="292.1" width="3.6" height="79.9" fill="#9a58cc" opacity="0.29"/>
<rect x="1034.0" y="280.6" width="3.6" height="91.4" fill="#9a58cc" opacity="0.63"/>
<rect x="1036.7" y="314.2" width="3.6" height="57.8" fill="#9a58cc" opacity="0.45"/>
<rect x="1039.3" y="324.8" width="3.6" height="47.2" fill="#9a58cc" opacity="0.37"/>
<rect x="1042.0" y="322.8" width="3.6" height="49.2" fill="#8a48c0" opacity="0.43"/>
<rect x="1044.7" y="266.6" width="3.6" height="105.4" fill="#c06ad0" opacity="0.42"/>
<rect x="1047.3" y="273.2" width="3.6" height="98.8" fill="#8a48c0" opacity="0.62"/>
<rect x="1050.0" y="272.5" width="3.6" height="99.5" fill="#9a58cc" opacity="0.45"/>
<rect x="1052.7" y="295.8" width="3.6" height="76.2" fill="#b070d8" opacity="0.33"/>
<rect x="1055.3" y="280.0" width="3.6" height="92.0" fill="#9a58cc" opacity="0.41"/>
<rect x="1058.0" y="273.2" width="3.6" height="98.8" fill="#8a48c0" opacity="0.56"/>
<rect x="1060.7" y="304.3" width="3.6" height="67.7" fill="#8a48c0" opacity="0.25"/>
<rect x="1063.3" y="306.0" width="3.6" height="66.0" fill="#b070d8" opacity="0.45"/>
<rect x="1066.0" y="270.7" width="3.6" height="101.3" fill="#c06ad0" opacity="0.54"/>
<rect x="1068.7" y="276.3" width="3.6" height="95.7" fill="#9a58cc" opacity="0.57"/>
<rect x="1071.3" y="248.7" width="3.6" height="123.3" fill="#b488e0" opacity="0.36"/>
<rect x="1074.0" y="272.4" width="3.6" height="99.6" fill="#a070d8" opacity="0.32"/>
<rect x="1076.7" y="295.1" width="3.6" height="76.9" fill="#c8a8ec" opacity="0.36"/>
<rect x="1079.3" y="277.5" width="3.6" height="94.5" fill="#c8a8ec" opacity="0.32"/>
<rect x="1082.0" y="269.0" width="3.6" height="103.0" fill="#a070d8" opacity="0.56"/>
<rect x="1084.7" y="295.3" width="3.6" height="76.7" fill="#d8c0f4" opacity="0.22"/>
<rect x="1087.3" y="258.0" width="3.6" height="114.0" fill="#b488e0" opacity="0.53"/>
<rect x="1090.0" y="260.1" width="3.6" height="111.9" fill="#c8a8ec" opacity="0.29"/>
<rect x="1092.7" y="264.0" width="3.6" height="108.0" fill="#a070d8" opacity="0.62"/>
<rect x="1095.3" y="263.7" width="3.6" height="108.3" fill="#d8c0f4" opacity="0.42"/>
<rect x="1098.0" y="281.7" width="3.6" height="90.3" fill="#b488e0" opacity="0.44"/>
<rect x="1100.7" y="260.5" width="3.6" height="111.5" fill="#c8a8ec" opacity="0.32"/>
<rect x="1103.3" y="250.2" width="3.6" height="121.8" fill="#a070d8" opacity="0.38"/>
<rect x="1106.0" y="250.6" width="3.6" height="121.4" fill="#a070d8" opacity="0.47"/>
<rect x="1108.7" y="267.3" width="3.6" height="104.7" fill="#d8c0f4" opacity="0.39"/>
<rect x="1111.3" y="300.4" width="3.6" height="71.6" fill="#d8c0f4" opacity="0.62"/>
<rect x="1114.0" y="274.8" width="3.6" height="97.2" fill="#a070d8" opacity="0.24"/>
<rect x="1116.7" y="310.1" width="3.6" height="61.9" fill="#a070d8" opacity="0.54"/>
<rect x="1119.3" y="311.9" width="3.6" height="60.1" fill="#d8c0f4" opacity="0.51"/>
<rect x="1122.0" y="283.3" width="3.6" height="88.7" fill="#d8c0f4" opacity="0.63"/>
<rect x="1124.7" y="271.7" width="3.6" height="100.3" fill="#d8c0f4" opacity="0.27"/>
<rect x="1127.3" y="290.9" width="3.6" height="81.1" fill="#c8a8ec" opacity="0.34"/>
<rect x="1130.0" y="310.8" width="3.6" height="61.2" fill="#c8a8ec" opacity="0.58"/>
<rect x="1132.7" y="281.4" width="3.6" height="90.6" fill="#c8a8ec" opacity="0.32"/>
<rect x="1135.3" y="326.0" width="3.6" height="46.0" fill="#a070d8" opacity="0.24"/>
<rect x="1138.0" y="315.6" width="3.6" height="56.4" fill="#d8c0f4" opacity="0.30"/>
</g><g filter="url(#blur2)">
<rect x="1057" y="246" width="7" height="70" fill="url(#pk)" opacity="0.85"/>
<rect x="1028" y="296" width="8" height="72" fill="url(#pk)" opacity="0.7"/>
<rect x="1010" y="305" width="5" height="58" fill="url(#pk)" opacity="0.55"/>
<rect x="1071.0" y="262" width="6" height="83" fill="url(#st2)" opacity="0.75"/>
<rect x="1082.0" y="250" width="8" height="102" fill="url(#st2)" opacity="0.8"/>
<rect x="1094.5" y="262" width="7" height="88" fill="url(#st2)" opacity="0.75"/>
<rect x="1106.5" y="272" width="7" height="76" fill="url(#st2)" opacity="0.75"/>
<rect x="1118.0" y="262" width="6" height="78" fill="url(#st2)" opacity="0.8"/>
<rect x="1043.0" y="285" width="6" height="70" fill="url(#st2)" opacity="0.6"/>
</g><g filter="url(#blur1)">
<rect x="973.7" y="240" width="2.6" height="95" fill="url(#st2)" opacity="0.8"/>
<rect x="984.6" y="222" width="2.8" height="118" fill="url(#st)" opacity="0.8"/>
<rect x="996.8" y="218" width="2.4" height="82" fill="url(#st)" opacity="0.8"/>
<rect x="1007.7" y="240" width="2.6" height="105" fill="url(#st2)" opacity="0.8"/>
<rect x="1022.3" y="250" width="3.4" height="112" fill="url(#st)" opacity="0.8"/>
<rect x="1033.5" y="240" width="3" height="120" fill="url(#st2)" opacity="0.8"/>
<rect x="1044.8" y="228" width="2.4" height="112" fill="url(#st2)" opacity="0.8"/>
<rect x="1056.7" y="240" width="2.6" height="110" fill="url(#st2)" opacity="0.8"/>
<rect x="1067.2" y="196" width="3.6" height="134" fill="url(#st3)" opacity="0.8"/>
<rect x="1080.6" y="202" width="2.8" height="133" fill="url(#st)" opacity="0.8"/>
<rect x="1093.6" y="212" width="2.8" height="133" fill="url(#st)" opacity="0.8"/>
<rect x="1104.7" y="228" width="2.6" height="112" fill="url(#st)" opacity="0.8"/>
<rect x="1115.4" y="240" width="3.2" height="105" fill="url(#st3)" opacity="0.8"/>
<rect x="1126.7" y="250" width="2.6" height="80" fill="url(#st2)" opacity="0.8"/>
</g></g>
<rect x="1378" y="508" width="20" height="11" fill="#141414" rx="2" />
<path d="M1384 517.5 L1388 513.5 L1392 517.5" stroke="#b4b4b4" stroke-width="2" fill="none" stroke-linecap="round" stroke-linejoin="round" />
<path d="M234 394 C258 394 257 421 281 421" stroke="#0c0c0c" stroke-width="5.2" fill="none" stroke-linecap="round" stroke-linejoin="round" />
<path d="M234 394 C258 394 257 421 281 421" stroke="#dfe8e0" stroke-width="3" fill="none" stroke-linecap="round" stroke-linejoin="round" />
<path d="M234 418 C258 418 257 445 281 445" stroke="#0c0c0c" stroke-width="5.2" fill="none" stroke-linecap="round" stroke-linejoin="round" />
<path d="M234 418 C258 418 257 445 281 445" stroke="#dfe8e0" stroke-width="3" fill="none" stroke-linecap="round" stroke-linejoin="round" />
<path d="M508 159 C528 165 528 290 555 298" stroke="#0c0c0c" stroke-width="4.800000000000001" fill="none" stroke-linecap="round" stroke-linejoin="round" />
<path d="M508 159 C528 165 528 290 555 298" stroke="url(#wfs)" stroke-width="2.6" fill="none" stroke-linecap="round" stroke-linejoin="round" />
<path d="M713 126 H755" stroke="#0c0c0c" stroke-width="4.800000000000001" fill="none" stroke-linecap="round" stroke-linejoin="round" />
<path d="M713 126 H755" stroke="#d7c8dd" stroke-width="2.6" fill="none" stroke-linecap="round" stroke-linejoin="round" />
<path d="M713 420 C738 416 732 388 755 386" stroke="#0c0c0c" stroke-width="4.800000000000001" fill="none" stroke-linecap="round" stroke-linejoin="round" />
<path d="M713 420 C738 416 732 388 755 386" stroke="#c7c729" stroke-width="2.6" fill="none" stroke-linecap="round" stroke-linejoin="round" />
<path d="M914 227 H948" stroke="#0c0c0c" stroke-width="4.800000000000001" fill="none" stroke-linecap="round" stroke-linejoin="round" />
<path d="M914 227 H948" stroke="#c7c729" stroke-width="2.6" fill="none" stroke-linecap="round" stroke-linejoin="round" />
<path d="M915 163 C926 166 924 178 906 194" stroke="#0c0c0c" stroke-width="4.2" fill="none" stroke-linecap="round" stroke-linejoin="round" />
<path d="M915 163 C926 166 924 178 906 194" stroke="#a8a8a8" stroke-width="2" fill="none" stroke-linecap="round" stroke-linejoin="round" />
<path d="M757 157.5 C768 151 790 146.5 830 140.5" stroke="#0c0c0c" stroke-width="4.2" fill="none" stroke-linecap="round" stroke-linejoin="round" />
<path d="M757 157.5 C768 151 790 146.5 830 140.5" stroke="#9a9a9a" stroke-width="2" fill="none" stroke-linecap="round" stroke-linejoin="round" />
<path d="M758 339 C751 345 745.5 351 746.5 356 C747.5 360.5 751 362.5 755 363" stroke="#0c0c0c" stroke-width="4.4" fill="none" stroke-linecap="round" stroke-linejoin="round" />
<path d="M758 339 C751 345 745.5 351 746.5 356 C747.5 360.5 751 362.5 755 363" stroke="#b0b0b0" stroke-width="2.2" fill="none" stroke-linecap="round" stroke-linejoin="round" />
<rect x="51" y="357" width="184" height="152" rx="6" fill="#000" opacity="0.35" filter="url(#blur2)"/>
<clipPath id="n52_356"><rect x="52" y="356" width="182" height="150" rx="5"/></clipPath><g clip-path="url(#n52_356)">
<rect x="52" y="356" width="182" height="150" fill="#2b2b2b" />
<rect x="52" y="356" width="182" height="22" fill="#832f47" />
</g>
<rect x="52" y="356" width="182" height="150" fill="none" rx="5" stroke="#dcdcdc" stroke-width="1.6" />
<path d="M65.3 365.4 L69.5 369.6 L73.7 365.4" stroke="#d8d8d8" stroke-width="1.5" fill="none" stroke-linecap="round" stroke-linejoin="round" />
<text x="79" y="370.9" font-size="13.6" fill="#e2e2e2" textLength="122" lengthAdjust="spacingAndGlyphs" stroke="#e2e2e2" stroke-width="0.35" >Sequencer Strip Info</text>
<text x="220" y="398.7" font-size="13.6" fill="#dadada" text-anchor="end" textLength="68" lengthAdjust="spacingAndGlyphs" stroke="#dadada" stroke-width="0.35" >Start Frame</text>
<rect x="231.0" y="388.0" width="6" height="12" rx="1.5" fill="#4f9461" stroke="#151515" stroke-width="1"/>
<text x="220" y="422.7" font-size="13.6" fill="#dadada" text-anchor="end" textLength="63" lengthAdjust="spacingAndGlyphs" stroke="#dadada" stroke-width="0.35" >End Frame</text>
<rect x="231.0" y="412.0" width="6" height="12" rx="1.5" fill="#4f9461" stroke="#151515" stroke-width="1"/>
<text x="220" y="445.7" font-size="13.6" fill="#dadada" text-anchor="end" textLength="51" lengthAdjust="spacingAndGlyphs" stroke="#dadada" stroke-width="0.35" >Location</text>
<rect x="231.0" y="435.0" width="6" height="12" rx="2.2" fill="#6363c7" stroke="#151515" stroke-width="1"/>
<text x="220" y="468.7" font-size="13.6" fill="#dadada" text-anchor="end" textLength="49" lengthAdjust="spacingAndGlyphs" stroke="#dadada" stroke-width="0.35" >Rotation</text>
<rect x="231.0" y="458.0" width="6" height="12" rx="1.5" fill="#a1a1a1" stroke="#151515" stroke-width="1"/>
<text x="220" y="492.7" font-size="13.6" fill="#dadada" text-anchor="end" textLength="32" lengthAdjust="spacingAndGlyphs" stroke="#dadada" stroke-width="0.35" >Scale</text>
<rect x="231.0" y="482.0" width="6" height="12" rx="2.2" fill="#6363c7" stroke="#151515" stroke-width="1"/>
<rect x="280" y="122" width="229" height="343" rx="6" fill="#000" opacity="0.35" filter="url(#blur2)"/>
<clipPath id="n281_121"><rect x="281" y="121" width="227" height="341" rx="5"/></clipPath><g clip-path="url(#n281_121)">
<rect x="281" y="121" width="227" height="341" fill="#2b2b2b" />
<rect x="281" y="121" width="227" height="22" fill="#832f47" />
</g>
<path d="M294.3 130.4 L298.5 134.6 L302.7 130.4" stroke="#d8d8d8" stroke-width="1.5" fill="none" stroke-linecap="round" stroke-linejoin="round" />
<text x="308" y="136.9" font-size="13.6" fill="#e2e2e2" textLength="67" lengthAdjust="spacingAndGlyphs" stroke="#e2e2e2" stroke-width="0.35" >Time Curve</text>
<text x="495" y="163.9" font-size="13.6" fill="#dadada" text-anchor="end" textLength="38" lengthAdjust="spacingAndGlyphs" stroke="#dadada" stroke-width="0.35" >Factor</text>
<rect x="505.0" y="153.0" width="6" height="12" rx="1.5" fill="#b5b5b5" stroke="#151515" stroke-width="1"/>
<rect x="409" y="180" width="21" height="20" fill="#4c4c4c" rx="3" />
<rect x="422" y="180" width="8" height="20" fill="#4c4c4c" />
<rect x="430.5" y="180" width="20" height="20" fill="#3a3a3a" rx="3" />
<rect x="430.5" y="180" width="8" height="20" fill="#3a3a3a" />
<rect x="452.5" y="180" width="20" height="20" fill="#1f1f1f" rx="3" />
<rect x="474" y="180" width="21" height="20" fill="#232323" rx="3" />
<circle cx="418" cy="189" r="5.8" fill="none" stroke="#e8e8e8" stroke-width="1.4"/>
<path d="M422.2 193.5 L426 197.5" stroke="#e8e8e8" stroke-width="1.6" fill="none" stroke-linecap="round" stroke-linejoin="round" />
<path d="M415 189 H421 M418 186 V192" stroke="#e8e8e8" stroke-width="1.2" fill="none" stroke-linecap="round" stroke-linejoin="round" />
<circle cx="440" cy="189" r="5.5" fill="none" stroke="#555" stroke-width="1.3"/>
<path d="M437 189 H443" stroke="#555" stroke-width="1.2" fill="none" stroke-linecap="round" stroke-linejoin="round" />
<circle cx="462.5" cy="190" r="5" fill="#f2f2f2"/>
<path d="M481.1 188.3 L484.5 191.7 L487.9 188.3" stroke="#d8d8d8" stroke-width="1.5" fill="none" stroke-linecap="round" stroke-linejoin="round" />
<clipPath id="cw"><rect x="292" y="204" width="205" height="176"/></clipPath><g clip-path="url(#cw)">
<rect x="292" y="204" width="205" height="176" fill="#494949" />
<path d="M292 379 C314 377 330 360 350 330 C378 285 400 238 445 216 C462 208 480 206 497 205.5 L497 380 L292 380 Z" fill="#323232"/>
<rect x="342.65" y="204" width="1.2" height="176" fill="#ffffff" opacity="0.055"/>
<rect x="292" y="247.4" width="205" height="1.2" fill="#ffffff" opacity="0.055"/>
<rect x="393.9" y="204" width="1.2" height="176" fill="#ffffff" opacity="0.055"/>
<rect x="292" y="291.4" width="205" height="1.2" fill="#ffffff" opacity="0.055"/>
<rect x="445.15" y="204" width="1.2" height="176" fill="#ffffff" opacity="0.055"/>
<rect x="292" y="335.4" width="205" height="1.2" fill="#ffffff" opacity="0.055"/>
<path d="M292 379 C314 377 330 360 350 330 C378 285 400 238 445 216 C462 208 480 206 497 205.5" stroke="#111" stroke-width="1.6" fill="none"/>
</g>
<rect x="292" y="204" width="205" height="176" fill="none" stroke="#5a5a52" stroke-width="1" />
<rect x="291.5" y="204" width="1.2" height="176" fill="#85857c" />
<circle cx="445" cy="216" r="3.6" fill="#f2f2f2"/>
<circle cx="316" cy="369.5" r="2.6" fill="#0a0a0a"/>
<rect x="292" y="387" width="22" height="20" fill="#3f6fb6" rx="3" />
<rect x="306" y="387" width="8" height="20" fill="#3f6fb6" />
<rect x="314.5" y="387" width="21" height="20" fill="#3c3c3c" />
<rect x="336" y="387" width="22" height="20" fill="#3c3c3c" rx="3" />
<rect x="336" y="387" width="8" height="20" fill="#3c3c3c" />
<rect x="359.5" y="387" width="56" height="20" fill="#3c3c3c" rx="3" />
<rect x="407" y="387" width="8.5" height="20" fill="#3c3c3c" />
<rect x="416.5" y="387" width="56" height="20" fill="#3c3c3c" rx="3" />
<rect x="416.5" y="387" width="8" height="20" fill="#3c3c3c" />
<rect x="474" y="387" width="21" height="20" fill="#3c3c3c" rx="3" />
<path d="M296 404 C296 394 299 390.5 303 390.5 C307 390.5 310 394 310 404" stroke="#f0f0f0" stroke-width="1.5" fill="none" stroke-linecap="round" stroke-linejoin="round" />
<circle cx="303" cy="390.5" r="1.5" fill="#f0f0f0"/>
<path d="M318 404 L325 390.5 L332 404" stroke="#e0e0e0" stroke-width="1.4" fill="none" stroke-linecap="round" stroke-linejoin="round" />
<circle cx="325" cy="390.5" r="1.5" fill="#e0e0e0"/>
<path d="M340 404 C341 397 344 393.5 347 393.5 C350 393.5 353 397 354 404" stroke="#e0e0e0" stroke-width="1.4" fill="none" stroke-linecap="round" stroke-linejoin="round" />
<path d="M341.5 390.5 H352.5" stroke="#e0e0e0" stroke-width="1.2" fill="none" stroke-linecap="round" stroke-linejoin="round" stroke-dasharray="2.2 2.2"/>
<text x="389" y="401.9" font-size="13.4" fill="#dadada" text-anchor="middle" stroke="#dadada" stroke-width="0.35" >0.7</text>
<text x="448.5" y="401.9" font-size="13.4" fill="#dadada" text-anchor="middle" stroke="#dadada" stroke-width="0.35" >0.9</text>
<path d="M480 392.5 L489 401.5 M489 392.5 L480 401.5" stroke="#e0e0e0" stroke-width="1.5" fill="none" stroke-linecap="round" stroke-linejoin="round" />
<text x="293" y="425.7" font-size="13.6" fill="#dadada" textLength="68" lengthAdjust="spacingAndGlyphs" stroke="#dadada" stroke-width="0.35" >Start Frame</text>
<text x="293" y="449.7" font-size="13.6" fill="#dadada" textLength="63" lengthAdjust="spacingAndGlyphs" stroke="#dadada" stroke-width="0.35" >End Frame</text>
<rect x="278.0" y="415.0" width="6" height="12" rx="1.5" fill="#4f9461" stroke="#151515" stroke-width="1"/>
<rect x="278.0" y="439.0" width="6" height="12" rx="1.5" fill="#4f9461" stroke="#151515" stroke-width="1"/>
<rect x="554" y="89" width="161" height="252" rx="6" fill="#000" opacity="0.35" filter="url(#blur2)"/>
<clipPath id="n555_88"><rect x="555" y="88" width="159" height="250" rx="5"/></clipPath><g clip-path="url(#n555_88)">
<rect x="555" y="88" width="159" height="250" fill="#2b2b2b" />
<rect x="555" y="88" width="159" height="22" fill="#633333" />
</g>
<path d="M568.3 97.4 L572.5 101.6 L576.7 97.4" stroke="#d8d8d8" stroke-width="1.5" fill="none" stroke-linecap="round" stroke-linejoin="round" />
<text x="582" y="103.9" font-size="13.6" fill="#e2e2e2" textLength="74" lengthAdjust="spacingAndGlyphs" stroke="#e2e2e2" stroke-width="0.35" >Ellipse Mask</text>
<text x="700" y="130.9" font-size="13.6" fill="#dadada" text-anchor="end" textLength="32" lengthAdjust="spacingAndGlyphs" stroke="#dadada" stroke-width="0.35" >Mask</text>
<circle cx="713.6" cy="126" r="5" fill="#b9b9b9" stroke="#151515" stroke-width="1.2"/>
<rect x="566" y="143" width="135" height="20.5" fill="#1e1e1e" rx="3" />
<text x="575" y="157.9" font-size="13.6" fill="#dadada" textLength="24" lengthAdjust="spacingAndGlyphs" stroke="#dadada" stroke-width="0.35" >Add</text>
<path d="M689.6 152.3 L693 155.7 L696.4 152.3" stroke="#d8d8d8" stroke-width="1.5" fill="none" stroke-linecap="round" stroke-linejoin="round" />
<rect x="552.0" y="147.0" width="6" height="12" rx="1.5" fill="#8c8c8c" stroke="#151515" stroke-width="1"/>
<rect x="566" y="168" width="135" height="20.5" fill="#4a4a4a" rx="3" />
<text x="583" y="182.9" font-size="13.6" fill="#dadada" textLength="32" lengthAdjust="spacingAndGlyphs" stroke="#dadada" stroke-width="0.35" >Mask</text>
<text x="685.5" y="182.9" font-size="13.6" fill="#dadada" text-anchor="end" textLength="35" lengthAdjust="spacingAndGlyphs" stroke="#dadada" stroke-width="0.35" >0.000</text>
<circle cx="555" cy="178" r="5" fill="#b9b9b9" stroke="#151515" stroke-width="1.2"/>
<rect x="566" y="192" width="135" height="20.5" fill="#3f6fb6" rx="3" />
<text x="583" y="206.9" font-size="13.6" fill="#f2f2f2" textLength="33" lengthAdjust="spacingAndGlyphs" stroke="#f2f2f2" stroke-width="0.35" >Value</text>
<text x="685.5" y="206.9" font-size="13.6" fill="#f2f2f2" text-anchor="end" textLength="35" lengthAdjust="spacingAndGlyphs" stroke="#f2f2f2" stroke-width="0.35" >1.000</text>
<circle cx="555" cy="202" r="5" fill="#b9b9b9" stroke="#151515" stroke-width="1.2"/>
<text x="566" y="231.0" font-size="13.6" fill="#dadada" textLength="49" lengthAdjust="spacingAndGlyphs" stroke="#dadada" stroke-width="0.35" >Position</text>
<rect x="552.0" y="221.0" width="6" height="12" rx="2.2" fill="#6363c7" stroke="#151515" stroke-width="1"/>
<clipPath id="pf"><rect x="566" y="241" width="135" height="41.5" rx="3"/></clipPath><g clip-path="url(#pf)">
<rect x="566" y="241" width="135" height="20.5" fill="#1e1e1e" />
<rect x="566" y="241" width="46" height="20.5" fill="#3f6fb6" />
<rect x="566" y="262" width="135" height="20.5" fill="#4a4a4a" />
<rect x="566" y="262" width="67" height="20.5" fill="#3f6fb6" />
</g>
<text x="615.5" y="255.0" font-size="13.6" fill="#f2f2f2" textLength="34" lengthAdjust="spacingAndGlyphs" stroke="#f2f2f2" stroke-width="0.35" >0.206</text>
<text x="615.5" y="276.0" font-size="13.6" fill="#f2f2f2" textLength="34" lengthAdjust="spacingAndGlyphs" stroke="#f2f2f2" stroke-width="0.35" >0.500</text>
<text x="566" y="302.0" font-size="13.6" fill="#dadada" textLength="25" lengthAdjust="spacingAndGlyphs" stroke="#dadada" stroke-width="0.35" >Size</text>
<rect x="552.0" y="292.0" width="6" height="12" rx="2.2" fill="#6363c7" stroke="#151515" stroke-width="1"/>
<rect x="566" y="312" width="135" height="20.5" fill="#4a4a4a" rx="3" />
<text x="583" y="326.0" font-size="13.6" fill="#dadada" textLength="49" lengthAdjust="spacingAndGlyphs" stroke="#dadada" stroke-width="0.35" >Rotation</text>
<text x="685" y="326.0" font-size="13.6" fill="#dadada" text-anchor="end" stroke="#dadada" stroke-width="0.35" >0°</text>
<rect x="552.0" y="316.0" width="6" height="12" rx="1.5" fill="#b5b5b5" stroke="#151515" stroke-width="1"/>
<rect x="754" y="111" width="163" height="34" rx="7" fill="#000" opacity="0.35" filter="url(#blur2)"/>
<rect x="755" y="110" width="160" height="32.5" fill="#442c5d" rx="6" />
<path d="M772.8 122.1 L777.2 126.5 L772.8 130.9" stroke="#e0e0e0" stroke-width="1.5" fill="none" stroke-linecap="round" stroke-linejoin="round" />
<text x="783" y="131.2" font-size="13.6" fill="#e6e6e6" textLength="78" lengthAdjust="spacingAndGlyphs" stroke="#e6e6e6" stroke-width="0.35" >Mask To SDF</text>
<circle cx="755" cy="126" r="5" fill="#c9a4db" stroke="#151515" stroke-width="1.2"/>
<circle cx="914.5" cy="121" r="5" fill="#b9b9b9" stroke="#151515" stroke-width="1.2"/>
<circle cx="914.5" cy="131.5" r="4" fill="#6a63c9" stroke="#151515" stroke-width="1.2"/>
<path d="M920.5 118.8 L923.5 121 L920.5 123.2 Z" stroke="none" stroke-width="0" fill="#d8d8d8" stroke-linecap="round" stroke-linejoin="round" />
<path d="M750.5 153.5 L747.5 155.5 L750.5 157.5 Z" stroke="none" stroke-width="0" fill="#d8d8d8" stroke-linecap="round" stroke-linejoin="round" />
<rect x="754" y="148" width="163" height="34" rx="7" fill="#000" opacity="0.35" filter="url(#blur2)"/>
<rect x="755" y="147" width="160" height="32.5" fill="#215f86" rx="6" />
<path d="M772.8 159.1 L777.2 163.5 L772.8 167.9" stroke="#e0e0e0" stroke-width="1.5" fill="none" stroke-linecap="round" stroke-linejoin="round" />
<text x="783" y="168.2" font-size="13.6" fill="#e6e6e6" textLength="38" lengthAdjust="spacingAndGlyphs" stroke="#e6e6e6" stroke-width="0.35" >Divide</text>
<circle cx="755" cy="157.5" r="4" fill="#b9b9b9" stroke="#151515" stroke-width="1.2"/>
<circle cx="755" cy="168.5" r="4" fill="#b9b9b9" stroke="#151515" stroke-width="1.2"/>
<circle cx="914.5" cy="163" r="5" fill="#b9b9b9" stroke="#151515" stroke-width="1.2"/>
<rect x="754" y="190" width="161.5" height="241" rx="6" fill="#000" opacity="0.35" filter="url(#blur2)"/>
<clipPath id="n755_189"><rect x="755" y="189" width="159.5" height="239" rx="5"/></clipPath><g clip-path="url(#n755_189)">
<rect x="755" y="189" width="159.5" height="239" fill="#2b2b2b" />
<rect x="755" y="189" width="159.5" height="22" fill="#737320" />
</g>
<path d="M768.3 198.4 L772.5 202.6 L776.7 198.4" stroke="#d8d8d8" stroke-width="1.5" fill="none" stroke-linecap="round" stroke-linejoin="round" />
<text x="783.8" y="204.9" font-size="13.6" fill="#e2e2e2" textLength="21" lengthAdjust="spacingAndGlyphs" stroke="#e2e2e2" stroke-width="0.35" >Mix</text>
<text x="901" y="231.9" font-size="13.6" fill="#dadada" text-anchor="end" textLength="35.5" lengthAdjust="spacingAndGlyphs" stroke="#dadada" stroke-width="0.35" >Result</text>
<circle cx="914" cy="227" r="5" fill="#cbcd30" stroke="#151515" stroke-width="1.2"/>
<rect x="767" y="246" width="135" height="21" fill="#232323" rx="3" />
<circle cx="780" cy="256.5" r="4.8" fill="#cbcd30"/>
<text x="796" y="261.2" font-size="13.6" fill="#dadada" textLength="33" lengthAdjust="spacingAndGlyphs" stroke="#dadada" stroke-width="0.35" >Color</text>
<path d="M890.6 255.3 L894 258.7 L897.4 255.3" stroke="#d8d8d8" stroke-width="1.5" fill="none" stroke-linecap="round" stroke-linejoin="round" />
<rect x="767" y="274" width="135" height="21" fill="#232323" rx="3" />
<text x="775" y="289.2" font-size="13.6" fill="#dadada" textLength="21" lengthAdjust="spacingAndGlyphs" stroke="#dadada" stroke-width="0.35" >Mix</text>
<path d="M890.6 283.3 L894 286.7 L897.4 283.3" stroke="#d8d8d8" stroke-width="1.5" fill="none" stroke-linecap="round" stroke-linejoin="round" />
<rect x="767" y="304" width="14.5" height="14.5" fill="#4d4d4d" rx="2.5" />
<text x="786" y="315.2" font-size="13.6" fill="#dadada" textLength="76" lengthAdjust="spacingAndGlyphs" stroke="#dadada" stroke-width="0.35" >Clamp Result</text>
<rect x="767" y="331" width="14.5" height="14.5" fill="#3f6fb6" rx="2.5" />
<path d="M770 338.5 L773.2 342 L778.8 334.5" stroke="#ffffff" stroke-width="1.8" fill="none" stroke-linecap="round" stroke-linejoin="round" />
<text x="786" y="342.2" font-size="13.6" fill="#dadada" textLength="78" lengthAdjust="spacingAndGlyphs" stroke="#dadada" stroke-width="0.35" >Clamp Factor</text>
<text x="768" y="367.4" font-size="13.6" fill="#dadada" textLength="38" lengthAdjust="spacingAndGlyphs" stroke="#dadada" stroke-width="0.35" >Factor</text>
<circle cx="755" cy="363" r="5" fill="#b9b9b9" stroke="#151515" stroke-width="1.2"/>
<text x="767" y="390.9" font-size="13.6" fill="#dadada" stroke="#dadada" stroke-width="0.35" >A</text>
<circle cx="755" cy="386" r="5" fill="#cbcd30" stroke="#151515" stroke-width="1.2"/>
<text x="767" y="414.9" font-size="13.6" fill="#dadada" stroke="#dadada" stroke-width="0.35" >B</text>
<circle cx="755" cy="410" r="5" fill="#cbcd30" stroke="#151515" stroke-width="1.2"/>
<rect x="827" y="401" width="74.5" height="19.5" fill="#020202" rx="3" />
<rect x="554" y="383" width="161" height="106" rx="6" fill="#000" opacity="0.35" filter="url(#blur2)"/>
<clipPath id="n555_382"><rect x="555" y="382" width="159" height="104" rx="5"/></clipPath><g clip-path="url(#n555_382)">
<rect x="555" y="382" width="159" height="104" fill="#2b2b2b" />
<rect x="555" y="382" width="159" height="22" fill="#1b1b1b" />
</g>
<path d="M568.3 391.4 L572.5 395.6 L576.7 391.4" stroke="#d8d8d8" stroke-width="1.5" fill="none" stroke-linecap="round" stroke-linejoin="round" />
<text x="582" y="397.9" font-size="13.6" fill="#e2e2e2" textLength="72" lengthAdjust="spacingAndGlyphs" stroke="#e2e2e2" stroke-width="0.35" >Group Input</text>
<rect x="555.4" y="382.4" width="158.2" height="103.2" fill="none" rx="5" stroke="#383838" stroke-width="0.9" />
<text x="700" y="424.9" font-size="13.6" fill="#dadada" text-anchor="end" textLength="39" lengthAdjust="spacingAndGlyphs" stroke="#dadada" stroke-width="0.35" >Image</text>
<text x="700" y="448.9" font-size="13.6" fill="#dadada" text-anchor="end" textLength="32" lengthAdjust="spacingAndGlyphs" stroke="#dadada" stroke-width="0.35" >Mask</text>
<circle cx="713.6" cy="420" r="5" fill="#cbcd30" stroke="#151515" stroke-width="1.2"/>
<circle cx="713.6" cy="444" r="5" fill="#cbcd30" stroke="#151515" stroke-width="1.2"/>
<circle cx="713.6" cy="467.5" r="4.8" fill="#222" stroke="#8f8f8f" stroke-width="1"/>
</svg>
</body></html>
